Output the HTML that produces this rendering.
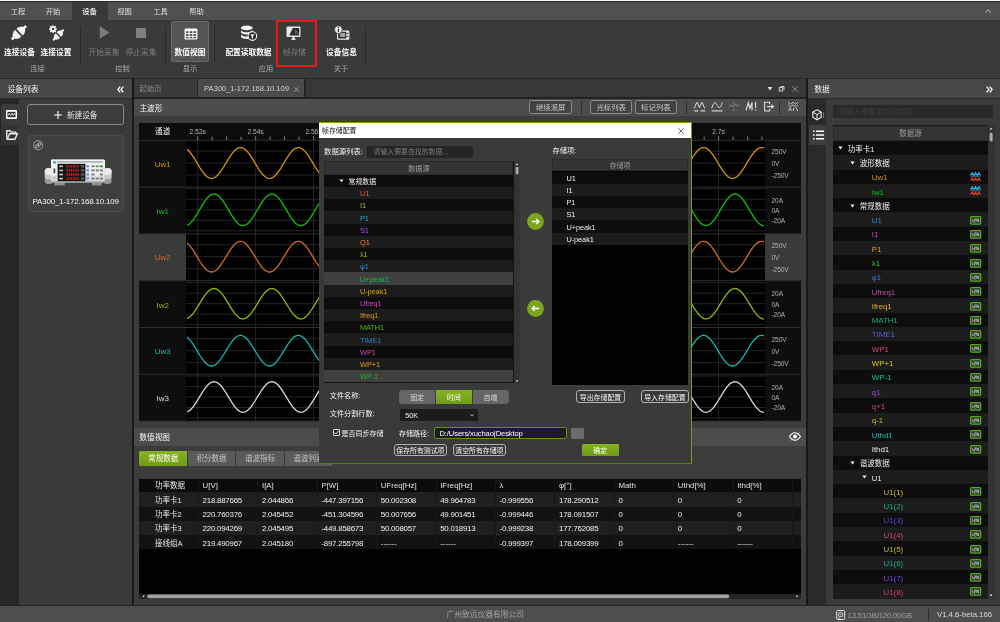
<!DOCTYPE html>
<html lang="zh"><head><meta charset="utf-8"><title>PA300</title><style>
html,body{margin:0;padding:0;background:#181818}
body{width:1000px;height:622px;position:relative;overflow:hidden;background:#181818;font-family:"Liberation Sans","Noto Sans CJK SC",sans-serif;font-size:7.5px;line-height:1;color:#e8e8e8;-webkit-font-smoothing:antialiased}
.a{position:absolute;box-sizing:border-box;white-space:nowrap}
.c{text-align:center}
.t{position:absolute;white-space:nowrap}
svg{position:absolute;overflow:visible}
#root{position:absolute;left:0;top:0;width:1000px;height:622px;will-change:transform}
</style></head><body><div id="root">
<div class="a" style="left:0.0px;top:0.0px;width:1000.0px;height:19.5px;background:#505050"></div>
<div class="a" style="left:0.0px;top:0.0px;width:1000.0px;height:2.4px;background:#262626"></div>
<div class="a" style="left:0.0px;top:0.0px;width:1000.0px;height:1.1px;background:#f6f6f6"></div>
<svg style="left:985.4px;top:8.6px" width="6.400" height="4" viewBox="0 0 6.400 4"><path d="M0.500 3.600L3.200 0.800L5.900 3.600" fill="none" stroke="#9a9a9a" stroke-width="1.100"/></svg>
<div class="a" style="left:71.5px;top:2.4px;width:36.0px;height:17.6px;background:#3a3a3a"></div>
<div class="t c" style="left:-2.0px;top:6.9px;width:40px;height:10px;line-height:10px;color:#ddd;font-size:7.3px;font-weight:400">工程</div>
<div class="t c" style="left:33.0px;top:6.9px;width:40px;height:10px;line-height:10px;color:#ddd;font-size:7.3px;font-weight:400">开始</div>
<div class="t c" style="left:69.5px;top:6.9px;width:40px;height:10px;line-height:10px;color:#fff;font-size:7.3px;font-weight:500">设备</div>
<div class="t c" style="left:104.5px;top:6.9px;width:40px;height:10px;line-height:10px;color:#ddd;font-size:7.3px;font-weight:400">视图</div>
<div class="t c" style="left:140.5px;top:6.9px;width:40px;height:10px;line-height:10px;color:#ddd;font-size:7.3px;font-weight:400">工具</div>
<div class="t c" style="left:176.5px;top:6.9px;width:40px;height:10px;line-height:10px;color:#ddd;font-size:7.3px;font-weight:400">帮助</div>
<div class="a" style="left:0.0px;top:19.5px;width:1000.0px;height:59.1px;background:#3a3a3a"></div>
<div class="a" style="left:0.0px;top:78.3px;width:1000.0px;height:1.1px;background:#262626"></div>
<div class="a" style="left:305.5px;top:78.5px;width:500.7px;height:0.9px;background:#444"></div>
<div class="a" style="left:79.5px;top:26.8px;width:1.0px;height:38.8px;background:#2b2b2b"></div>
<div class="a" style="left:164.5px;top:26.8px;width:1.0px;height:38.8px;background:#2b2b2b"></div>
<div class="a" style="left:214.2px;top:26.8px;width:1.0px;height:38.8px;background:#2b2b2b"></div>
<div class="a" style="left:365.1px;top:26.8px;width:1.0px;height:38.8px;background:#2b2b2b"></div>
<div class="a" style="left:171.2px;top:21.2px;width:37.6px;height:40.8px;background:#555;border:1px solid #6a6a6a;border-radius:2px"></div>
<div class="a" style="left:276.4px;top:19.5px;width:40.6px;height:47.5px;border:2.3px solid #f0141c"></div>
<div class="t c" style="left:-10.5px;top:48.1px;width:60px;height:10px;line-height:10px;color:#fff;font-size:7.7px;font-weight:700">连接设备</div>
<div class="t c" style="left:26.0px;top:48.1px;width:60px;height:10px;line-height:10px;color:#fff;font-size:7.7px;font-weight:700">连接设置</div>
<div class="t c" style="left:74.0px;top:48.1px;width:60px;height:10px;line-height:10px;color:#7c7c7c;font-size:7.7px;font-weight:400">开始采集</div>
<div class="t c" style="left:111.0px;top:48.1px;width:60px;height:10px;line-height:10px;color:#7c7c7c;font-size:7.7px;font-weight:400">停止采集</div>
<div class="t c" style="left:160.0px;top:48.1px;width:60px;height:10px;line-height:10px;color:#fff;font-size:7.7px;font-weight:700">数值视图</div>
<div class="t c" style="left:218.5px;top:48.1px;width:60px;height:10px;line-height:10px;color:#fff;font-size:7.7px;font-weight:700">配置读取数据</div>
<div class="t c" style="left:264.5px;top:48.1px;width:60px;height:10px;line-height:10px;color:#7c7c7c;font-size:7.7px;font-weight:400">帧存储</div>
<div class="t c" style="left:311.5px;top:48.1px;width:60px;height:10px;line-height:10px;color:#fff;font-size:7.7px;font-weight:700">设备信息</div>
<div class="t c" style="left:17.5px;top:64.1px;width:40px;height:10px;line-height:10px;color:#a8a8a8;font-size:7.2px">连接</div>
<div class="t c" style="left:102.5px;top:64.1px;width:40px;height:10px;line-height:10px;color:#a8a8a8;font-size:7.2px">控制</div>
<div class="t c" style="left:170.0px;top:64.1px;width:40px;height:10px;line-height:10px;color:#a8a8a8;font-size:7.2px">显示</div>
<div class="t c" style="left:246.0px;top:64.1px;width:40px;height:10px;line-height:10px;color:#a8a8a8;font-size:7.2px">应用</div>
<div class="t c" style="left:321.0px;top:64.1px;width:40px;height:10px;line-height:10px;color:#a8a8a8;font-size:7.2px">关于</div>
<svg style="left:0;top:0" width="80" height="50" viewBox="0 0 80 50"><g transform="translate(18.9 32.7) rotate(-43)" fill="#f2f2f2"><path d="M-9.800 -1.300H-7L-6.400 -2.600L-3.200 -4.500H-0.900V4.500H-3.200L-6.400 2.600L-7 1.300H-9.800Z"/><path d="M-9.800 -1.300H-7L-6.400 -2.600L-3.200 -4.500H-0.900V4.500H-3.200L-6.400 2.600L-7 1.300H-9.800Z" transform="scale(-1 1)"/></g></svg>
<svg style="left:0;top:0" width="80" height="50" viewBox="0 0 80 50"><path d="M54.50 29.10L56.90 29.10M54.06 30.16L55.76 31.86M53.00 30.60L53.00 33.00M51.94 30.16L50.24 31.86M51.50 29.10L49.10 29.10M51.94 28.04L50.24 26.34M53.00 27.60L53.00 25.20M54.06 28.04L55.76 26.34" stroke="#f2f2f2" stroke-width="1.5"/><circle cx="53" cy="29.1" r="2.1" fill="none" stroke="#f2f2f2" stroke-width="1.7"/><g transform="translate(58.4 35) rotate(-45) scale(0.76 0.700)" fill="#f2f2f2"><path d="M-9.800 -1.300H-7L-6.400 -2.600L-3.200 -4.500H-0.900V4.500H-3.200L-6.400 2.600L-7 1.300H-9.800Z"/><path d="M-9.800 -1.300H-7L-6.400 -2.600L-3.200 -4.500H-0.900V4.500H-3.200L-6.400 2.600L-7 1.300H-9.800Z" transform="scale(-1 1)"/></g></svg>
<svg style="left:99px;top:26px" width="12" height="13" viewBox="0 0 12 13"><path d="M0.8 0.3L10.5 6.5L0.8 12.7Z" fill="#7c7c7c"/></svg>
<div class="a" style="left:135.8px;top:27.6px;width:10.5px;height:10.4px;background:#808080"></div>
<svg style="left:183.9px;top:27.8px" width="14" height="12" viewBox="0 0 14 12"><rect x="0.6" y="0.6" width="12.8" height="10.8" rx="1" fill="#fff"/><g fill="#555"><rect x="2" y="3.2" width="2.6" height="1.9"/><rect x="5.6" y="3.2" width="2.8" height="1.9"/><rect x="9.4" y="3.2" width="2.6" height="1.9"/><rect x="2" y="6" width="2.6" height="1.9"/><rect x="5.6" y="6" width="2.8" height="1.9"/><rect x="9.4" y="6" width="2.6" height="1.9"/><rect x="2" y="8.8" width="2.6" height="1.6"/><rect x="5.6" y="8.8" width="2.8" height="1.6"/><rect x="9.4" y="8.8" width="2.6" height="1.6"/></g></svg>
<svg style="left:240px;top:24.5px" width="18" height="17" viewBox="0 0 18 17"><g fill="#f2f2f2"><ellipse cx="6.8" cy="2.9" rx="5.8" ry="2.3"/><path d="M1 5c0 1.2 2.6 2.2 5.8 2.2s5.8-1 5.8-2.2v2.3c0 1.2-2.6 2.2-5.8 2.2S1 8.500 1 7.300z"/><path d="M1 9.3c0 1.200 2.600 2.200 5.800 2.200s5.800-1 5.800-2.200v2.400c0 1.200-2.600 2.200-5.800 2.200S1 12.900 1 11.700z"/></g><circle cx="12.400" cy="11.100" r="4.300" fill="#2c2c2c" stroke="#f2f2f2" stroke-width="1.100"/><path d="M10.300 9.300h4.200l-1.400 1.900v2.300h-1.400v-2.300z" fill="#f2f2f2"/></svg>
<svg style="left:0;top:0" width="400" height="50" viewBox="0 0 400 50"><rect x="286.500" y="26.600" width="14" height="10.300" rx="1" fill="#e6e6e6"/><path d="M289.300 35.500L292.800 28.100H299.200V35.500Z" fill="#2e2e2e"/><path d="M295 30.300L296.600 31.800L295 33.300M297.200 33.400H298.400" stroke="#d0d0d0" stroke-width="0.700" fill="none"/><path d="M292.600 36.900H294.400L295.800 39.900H291.200Z" fill="#e6e6e6"/></svg>
<svg style="left:0;top:0" width="400" height="50" viewBox="0 0 400 50"><rect x="337.600" y="31.200" width="11.200" height="8" rx="0.800" fill="#2e2e2e" stroke="#ececec" stroke-width="1.200"/><rect x="346.300" y="31.200" width="2.500" height="8" fill="#ececec"/><path d="M346.300 33.400H349M346.300 36.400H349" stroke="#3a3a3a" stroke-width="0.800"/><rect x="340.300" y="33.300" width="4.800" height="3.400" fill="#d8d8d8"/><path d="M341.200 34.200V35.900M342.700 34.200V35.900M344.200 34.200V35.900" stroke="#3a3a3a" stroke-width="0.600"/><circle cx="338.400" cy="29.600" r="3.900" fill="#f4f4f4" stroke="#3a3a3a" stroke-width="0.800"/><rect x="337.700" y="28.900" width="1.400" height="3" fill="#2e2e2e"/><circle cx="338.400" cy="27.500" r="0.800" fill="#2e2e2e"/></svg>
<div class="a" style="left:0.0px;top:604.6px;width:1000.0px;height:17.4px;background:#4d4d4d;border-top:1px solid #222"></div>
<div class="t c" style="left:425.3px;top:610.4px;width:120px;height:10px;line-height:10px;color:#a8a8a8;font-size:7.75px">广州致远仪器有限公司</div>
<div class="a" style="left:927.6px;top:609.0px;width:1.0px;height:11.5px;background:#2e2e2e"></div>
<svg style="left:836.4px;top:610px" width="9.4" height="10" viewBox="0 0 9 10"><rect x="0.5" y="0.5" width="8" height="9" rx="1" fill="none" stroke="#e4e4e4" stroke-width="1"/><circle cx="4.5" cy="4.600" r="2.200" fill="none" stroke="#e4e4e4" stroke-width="0.900"/><circle cx="4.500" cy="4.600" r="0.700" fill="#e4e4e4"/><rect x="1.600" y="7.600" width="2" height="0.900" fill="#e4e4e4"/></svg>
<div class="t" style="left:847.6px;top:610.6px;height:10px;line-height:10px;color:#a0a0a0;font-size:7.7px;letter-spacing:-0.17px">13.51GB/120.00GB</div>
<div class="t" style="left:937.0px;top:610.0px;height:10px;line-height:10px;color:#d8d8d8;font-size:7.8px;letter-spacing:-0.03px">V1.4.6-beta.166</div>
<div class="a" style="left:0.0px;top:79.0px;width:131.8px;height:18.5px;background:#474747"></div>
<div class="t" style="left:7.4px;top:84.6px;height:10px;line-height:10px;color:#f0f0f0;font-size:7.75px">设备列表</div>
<svg style="left:116.5px;top:85.5px" width="7" height="7" viewBox="0 0 7 7"><path d="M3.2 0.7L0.9 3.5L3.2 6.3M6.3 0.7L4 3.5L6.3 6.3" fill="none" stroke="#fff" stroke-width="1.3"/></svg>
<div class="a" style="left:0.0px;top:97.5px;width:131.8px;height:1.0px;background:#2c2c2c"></div>
<div class="a" style="left:0.0px;top:98.5px;width:131.8px;height:506.5px;background:#3a3a3a"></div>
<div class="a" style="left:0.0px;top:98.5px;width:19.0px;height:506.5px;background:#272727"></div>
<div class="a" style="left:1.4px;top:104.0px;width:17.6px;height:20.6px;background:#3b3b3b;border-radius:1.5px 0 0 1.5px"></div>
<div class="a" style="left:1.4px;top:124.6px;width:17.6px;height:20.8px;background:#343434"></div>
<svg style="left:5.5px;top:110px" width="11" height="9" viewBox="0 0 11 9"><rect x="0" y="0" width="11" height="9" rx="1.200" fill="#fff"/><rect x="1.500" y="1.800" width="8" height="5.400" fill="#2a2a2a"/><path d="M2 5.6L3.3 3.2L4.6 5.6L5.9 3.2L7.2 5.6L8.5 3.2L9.2 4.5" fill="none" stroke="#fff" stroke-width="0.8"/></svg>
<svg style="left:5.5px;top:130px" width="12" height="10" viewBox="0 0 12 10"><path d="M0.800 8.500V0.800H4.200l1 1.300H9.800V3.300" fill="none" stroke="#e8e8e8" stroke-width="1.400"/><path d="M3.600 3.800H11.300L8.900 9.200H1.200z" fill="none" stroke="#e8e8e8" stroke-width="1.400"/></svg>
<div class="a" style="left:26.9px;top:103.5px;width:97.1px;height:21.8px;border:1px solid #8a8a8a;border-radius:3px;background:#3c3c3c"></div>
<svg style="left:53.5px;top:110.5px" width="8" height="8" viewBox="0 0 8 8"><path d="M4 0V8M0 4H8" stroke="#fff" stroke-width="1.1"/></svg>
<div class="t" style="left:67.0px;top:110.6px;height:10px;line-height:10px;color:#e0e0e0;font-size:7.6px">新建设备</div>
<div class="a" style="left:27.5px;top:134.5px;width:96.5px;height:77.5px;border:1px solid #4b4b4b;border-radius:2px;background:#3f3f3f"></div>
<svg style="left:32.800px;top:139.600px" width="10.400" height="10.400" viewBox="0 0 10.400 10.400"><circle cx="5.200" cy="5.200" r="4.600" fill="none" stroke="#9c9c9c" stroke-width="1"/><g transform="rotate(-40 5.200 5.200)" fill="none" stroke="#a8a8a8" stroke-width="1"><rect x="2" y="3.900" width="3.600" height="2.600" rx="1.300"/><rect x="4.800" y="3.900" width="3.600" height="2.600" rx="1.300"/></g></svg>
<svg style="left:44px;top:158px" width="70" height="30" viewBox="0 0 70 30"><rect x="0.800" y="10.300" width="8" height="15.700" rx="3" fill="#9a9a9a"/><rect x="0.800" y="10.300" width="8" height="11" rx="3" fill="#c8c8c8"/><rect x="0.800" y="10.300" width="8" height="6.500" rx="3" fill="#ececec"/><rect x="59.500" y="10.300" width="8" height="15.700" rx="3" fill="#9a9a9a"/><rect x="59.500" y="10.300" width="8" height="11" rx="3" fill="#c8c8c8"/><rect x="59.500" y="10.300" width="8" height="6.500" rx="3" fill="#ececec"/><rect x="10.400" y="24" width="10.300" height="3.400" fill="#8e8e8e"/><rect x="47.800" y="24" width="9.800" height="3.400" fill="#8e8e8e"/><rect x="7" y="1.800" width="53.800" height="22.900" rx="1" fill="#b0b0b0"/><rect x="7" y="1.800" width="53.800" height="21.300" rx="1" fill="#dcdcdc"/><rect x="7" y="1.800" width="53.800" height="16" rx="1" fill="#ececec"/><rect x="7" y="1.800" width="53.800" height="8" rx="1" fill="#f4f4f4"/><rect x="13" y="3" width="46" height="1.800" fill="#b4b8bc"/><rect x="13.600" y="5.800" width="27.800" height="17.400" fill="#161616"/><g stroke="#cc1c1c" stroke-width="2.300" stroke-dasharray="1.500 0.700"><path d="M22.500 8.300H35M22.500 12.400H35M22.500 16.500H35M22.500 20.600H35"/></g><g fill="#cfcfcf"><rect x="15.300" y="7.500" width="3.600" height="1.600"/><rect x="15.300" y="11.600" width="3.600" height="1.600"/><rect x="15.300" y="15.700" width="3.600" height="1.600"/><rect x="15.300" y="19.800" width="3.600" height="1.600"/></g><g fill="#555"><rect x="36.800" y="7" width="3.400" height="2.600"/><rect x="36.800" y="11.100" width="3.400" height="2.600"/><rect x="36.800" y="15.200" width="3.400" height="2.600"/><rect x="36.800" y="19.300" width="3.400" height="2.600"/></g><rect x="9.600" y="10.500" width="1.600" height="4.600" fill="#444"/><rect x="9.300" y="3.300" width="2.400" height="2.200" fill="#2a7fd0"/><circle cx="10.400" cy="20" r="1.200" fill="none" stroke="#aaa" stroke-width="0.500"/><g fill="#6a9ad8"><rect x="42.400" y="7" width="2.600" height="2.400"/><rect x="42.400" y="11.100" width="2.600" height="2.400"/><rect x="42.400" y="15.200" width="2.600" height="2.400"/><rect x="42.400" y="19.300" width="2.600" height="2.400"/></g><g fill="#70747a"><rect x="47.500" y="7.500" width="3" height="1.600"/><rect x="51.700" y="7.500" width="3" height="1.600"/><rect x="47.500" y="11.500" width="3" height="1.800"/><rect x="51.700" y="11.500" width="3" height="1.800"/><rect x="55.900" y="11.500" width="3" height="1.800"/><rect x="47.500" y="15.600" width="3" height="1.800"/><rect x="55.900" y="15.600" width="3" height="1.800"/><rect x="47.500" y="19.700" width="3" height="1.800"/><rect x="51.700" y="19.700" width="3" height="1.800"/><rect x="55.900" y="19.700" width="3" height="1.800"/></g><ellipse cx="57.300" cy="8.300" rx="1.600" ry="1.200" fill="#38b038"/></svg>
<div class="t c" style="left:20.6px;top:197.1px;width:110px;height:10px;line-height:10px;color:#f4f4f4;font-size:8px;letter-spacing:-0.2px">PA300_1-172.168.10.109</div>
<div class="a" style="left:134.0px;top:79.4px;width:672.2px;height:18.1px;background:#383838"></div>
<div class="a" style="left:134.0px;top:79.4px;width:63.0px;height:18.1px;background:#3b3b3b"></div>
<div class="t" style="left:139.5px;top:84.4px;height:10px;line-height:10px;color:#8a8a8a;font-size:7.4px">起始页</div>
<div class="a" style="left:197.5px;top:79.4px;width:107.0px;height:18.1px;background:#4a4a4a"></div>
<div class="a" style="left:196.9px;top:79.4px;width:1.3px;height:18.1px;background:#262626"></div>
<div class="a" style="left:304.4px;top:79.4px;width:1.2px;height:18.1px;background:#262626"></div>
<div class="t" style="left:204.0px;top:84.4px;height:10px;line-height:10px;color:#d0d0d0;font-size:7.7px;letter-spacing:-0.1px">PA300_1-172.168.10.109</div>
<svg style="left:294px;top:86.5px" width="5" height="5" viewBox="0 0 5 5"><path d="M0.3 0.3L4.7 4.7M4.7 0.3L0.3 4.7" stroke="#bbb" stroke-width="0.7"/></svg>
<svg style="left:767px;top:86px" width="34" height="6" viewBox="0 0 34 6"><path d="M0.5 1L5.5 1L3 4.6Z" fill="#ddd"/><rect x="12.3" y="1.6" width="3.4" height="3.4" fill="none" stroke="#ddd" stroke-width="0.9"/><path d="M13.6 0.5H17V3.8" fill="none" stroke="#ddd" stroke-width="0.9"/><path d="M25.3 0.3L30.7 5.7M30.7 0.3L25.3 5.7" stroke="#999" stroke-width="0.8"/></svg>
<div class="a" style="left:134.0px;top:97.5px;width:672.2px;height:507.5px;background:#3c3c3c"></div>
<div class="a" style="left:134.0px;top:97.3px;width:672.2px;height:2.0px;background:#222"></div>
<div class="a" style="left:134.0px;top:99.3px;width:672.2px;height:17.0px;background:#4c4c4c"></div>
<div class="t" style="left:139.5px;top:103.8px;height:10px;line-height:10px;color:#f4f4f4;font-size:7.6px">主波形</div>
<div class="a" style="left:529.4px;top:100.2px;width:42.6px;height:13.6px;border:1px solid #8c8c8c;border-radius:2.5px;background:#424242"></div>
<div class="t c" style="left:520.7px;top:102.8px;width:60px;height:10px;line-height:10px;color:#c8c8c8;font-size:7.4px">继续滚屏</div>
<div class="a" style="left:590.2px;top:100.2px;width:42.0px;height:13.6px;border:1px solid #8c8c8c;border-radius:2.5px;background:#424242"></div>
<div class="t c" style="left:581.2px;top:102.8px;width:60px;height:10px;line-height:10px;color:#c8c8c8;font-size:7.4px">光标列表</div>
<div class="a" style="left:635.1px;top:100.2px;width:41.5px;height:13.6px;border:1px solid #8c8c8c;border-radius:2.5px;background:#424242"></div>
<div class="t c" style="left:625.9px;top:102.8px;width:60px;height:10px;line-height:10px;color:#c8c8c8;font-size:7.4px">标记列表</div>
<div class="a" style="left:581.0px;top:101.0px;width:1.0px;height:13.0px;background:#2e2e2e"></div>
<div class="a" style="left:685.5px;top:101.0px;width:1.0px;height:13.0px;background:#2e2e2e"></div>
<div class="a" style="left:778.5px;top:101.0px;width:1.0px;height:13.0px;background:#2e2e2e"></div>
<svg style="left:0;top:0" width="1000" height="130" viewBox="0 0 1000 130" fill="none" stroke="#dcdcdc" stroke-width="1"><path d="M694.3 108.6L696.6 102.600Q697 101.800 697.400 102.600L699.400 107.600L701.600 102.600Q702 101.800 702.400 102.600L704.700 108.600"/><path d="M694.300 110.900H698.200M700.600 110.900H705.200" stroke-width="1.100"/><path d="M711.800 108.400C713.500 101.500 715.500 101.500 717.300 105.400S720.500 108 722.400 102.400"/><path d="M711.500 110.900H722.600" stroke-width="1.100"/><path d="M729 107.500C730.500 104.500 731.500 104.500 732.700 106.500S734.500 103 735.500 104S737.500 108 739 104.500" stroke="#9a9a9a" stroke-width="0.900"/><path d="M733.900 102.300V103.300M733.900 109.500V110.500" stroke="#bbb" stroke-width="1.100"/><path d="M746 110.400L748.300 102.800L749.800 108.400L752 102.600V110.400" stroke-width="1.200"/><path d="M755.600 102V108M755.600 109.300V110.600" stroke-width="1.200"/><path d="M769.600 104.300V102.200H764.600V111H769.600V108.900" stroke-width="1.100"/><path d="M767 106.600H772" stroke-width="1.300"/><path d="M771.300 104L774.300 106.600L771.300 109.200Z" fill="#dcdcdc" stroke="none"/><path d="M788 102.200L790.500 104.400L793 102.200L795.500 104.400L798 102.200M788 104.800L790.500 107L793 104.800L795.500 107L798 104.800M788.600 111L790 107.800L791.400 111M793.400 108V111M796 107.800L797.800 111" stroke-width="0.800"/></svg>
<div class="a" style="left:139.2px;top:122.7px;width:661.4px;height:298.3px;background:#000"></div>
<div class="a" style="left:139.2px;top:122.7px;width:661.4px;height:17.3px;background:#0c0c0c"></div>
<div class="a" style="left:139.2px;top:140.0px;width:47.0px;height:281.0px;background:#0e0e0e"></div>
<div class="a" style="left:765.4px;top:140.0px;width:35.2px;height:281.0px;background:#0e0e0e"></div>
<div class="a" style="left:139.2px;top:233.6px;width:47.0px;height:46.8px;background:#3a3a3a"></div>
<div class="a" style="left:765.4px;top:233.6px;width:35.2px;height:46.8px;background:#3a3a3a"></div>
<div class="t c" style="left:139.7px;top:127.3px;width:46px;height:10px;line-height:10px;color:#f0f0f0;font-size:7.6px">通道</div>
<svg style="left:0;top:0" width="1000" height="622" viewBox="0 0 1000 622"><path d="M197.7 140V421.0" stroke="#2d2d2d" stroke-width="0.8"/><path d="M255.6 140V421.0" stroke="#2d2d2d" stroke-width="0.8"/><path d="M313.5 140V421.0" stroke="#2d2d2d" stroke-width="0.8"/><path d="M371.3 140V421.0" stroke="#2d2d2d" stroke-width="0.8"/><path d="M429.2 140V421.0" stroke="#2d2d2d" stroke-width="0.8"/><path d="M487.1 140V421.0" stroke="#2d2d2d" stroke-width="0.8"/><path d="M545.0 140V421.0" stroke="#2d2d2d" stroke-width="0.8"/><path d="M602.9 140V421.0" stroke="#2d2d2d" stroke-width="0.8"/><path d="M660.7 140V421.0" stroke="#2d2d2d" stroke-width="0.8"/><path d="M718.6 140V421.0" stroke="#2d2d2d" stroke-width="0.8"/><path d="M197.7 136.2V140M212.2 136.6V140M226.6 136.6V140M241.1 136.6V140M255.6 136.2V140M270.1 136.6V140M284.5 136.6V140M299.0 136.6V140M313.5 136.2V140M327.9 136.6V140M342.4 136.6V140M356.9 136.6V140M371.3 136.2V140M385.8 136.6V140M400.3 136.6V140M414.8 136.6V140M429.2 136.2V140M443.7 136.6V140M458.2 136.6V140M472.6 136.6V140M487.1 136.2V140M501.6 136.6V140M516.0 136.6V140M530.5 136.6V140M545.0 136.2V140M559.5 136.6V140M573.9 136.6V140M588.4 136.6V140M602.9 136.2V140M617.3 136.6V140M631.8 136.6V140M646.3 136.6V140M660.7 136.2V140M675.2 136.6V140M689.7 136.6V140M704.2 136.6V140M718.6 136.2V140M733.1 136.6V140M747.6 136.6V140M762.0 136.6V140" stroke="#9a9a9a" stroke-width="0.8"/><path d="M186.2 151.0H765.4" stroke="#2f2f2f" stroke-width="0.8"/><path d="M186.2 163.0H765.4" stroke="#2f2f2f" stroke-width="0.8"/><path d="M186.2 175.0H765.4" stroke="#2f2f2f" stroke-width="0.8"/><path d="M186.2 188.8H765.4" stroke="#2f2f2f" stroke-width="0.8"/><path d="M186.2 199.3H765.4" stroke="#2f2f2f" stroke-width="0.8"/><path d="M186.2 209.8H765.4" stroke="#2f2f2f" stroke-width="0.8"/><path d="M186.2 220.3H765.4" stroke="#2f2f2f" stroke-width="0.8"/><path d="M186.2 230.8H765.4" stroke="#2f2f2f" stroke-width="0.8"/><path d="M186.2 244.7H765.4" stroke="#2f2f2f" stroke-width="0.8"/><path d="M186.2 256.7H765.4" stroke="#2f2f2f" stroke-width="0.8"/><path d="M186.2 268.7H765.4" stroke="#2f2f2f" stroke-width="0.8"/><path d="M186.2 282.7H765.4" stroke="#2f2f2f" stroke-width="0.8"/><path d="M186.2 293.2H765.4" stroke="#2f2f2f" stroke-width="0.8"/><path d="M186.2 303.7H765.4" stroke="#2f2f2f" stroke-width="0.8"/><path d="M186.2 314.2H765.4" stroke="#2f2f2f" stroke-width="0.8"/><path d="M186.2 324.7H765.4" stroke="#2f2f2f" stroke-width="0.8"/><path d="M186.2 338.7H765.4" stroke="#2f2f2f" stroke-width="0.8"/><path d="M186.2 350.7H765.4" stroke="#2f2f2f" stroke-width="0.8"/><path d="M186.2 362.7H765.4" stroke="#2f2f2f" stroke-width="0.8"/><path d="M186.2 376.0H765.4" stroke="#2f2f2f" stroke-width="0.8"/><path d="M186.2 386.5H765.4" stroke="#2f2f2f" stroke-width="0.8"/><path d="M186.2 397.0H765.4" stroke="#2f2f2f" stroke-width="0.8"/><path d="M186.2 407.5H765.4" stroke="#2f2f2f" stroke-width="0.8"/><path d="M186.2 418.0H765.4" stroke="#2f2f2f" stroke-width="0.8"/><path d="M139.2 140.3H800.6" stroke="#303030" stroke-width="1"/><path d="M139.2 187.1H800.6" stroke="#303030" stroke-width="1"/><path d="M139.2 233.9H800.6" stroke="#303030" stroke-width="1"/><path d="M139.2 280.7H800.6" stroke="#303030" stroke-width="1"/><path d="M139.2 327.5H800.6" stroke="#303030" stroke-width="1"/><path d="M139.2 374.3H800.6" stroke="#303030" stroke-width="1"/><path d="M139.2 421.1H800.6" stroke="#303030" stroke-width="1"/><path d="M187.0 149.3L188.0 150.2L189.0 151.1L190.0 152.3L191.0 153.5L192.0 154.9L193.0 156.4L194.0 157.9L195.0 159.5L196.0 161.2L197.0 162.8L198.0 164.5L199.0 166.2L200.0 167.8L201.0 169.3L202.0 170.8L203.0 172.2L204.0 173.5L205.0 174.7L206.0 175.7L207.0 176.6L208.0 177.3L209.0 177.8L210.0 178.2L211.0 178.4L212.0 178.4L213.0 178.2L214.0 177.9L215.0 177.3L216.0 176.6L217.0 175.8L218.0 174.8L219.0 173.6L220.0 172.4L221.0 171.0L222.0 169.5L223.0 168.0L224.0 166.4L225.0 164.7L226.0 163.1L227.0 161.4L228.0 159.7L229.0 158.1L230.0 156.6L231.0 155.1L232.0 153.7L233.0 152.4L234.0 151.3L235.0 150.3L236.0 149.4L237.0 148.7L238.0 148.2L239.0 147.8L240.0 147.6L241.0 147.6L242.0 147.8L243.0 148.2L244.0 148.7L245.0 149.4L246.0 150.3L247.0 151.3L248.0 152.4L249.0 153.7L250.0 155.1L251.0 156.6L252.0 158.1L253.0 159.7L254.0 161.4L255.0 163.1L256.0 164.7L257.0 166.4L258.0 168.0L259.0 169.5L260.0 171.0L261.0 172.4L262.0 173.6L263.0 174.8L264.0 175.8L265.0 176.6L266.0 177.3L267.0 177.9L268.0 178.2L269.0 178.4L270.0 178.4L271.0 178.2L272.0 177.8L273.0 177.3L274.0 176.6L275.0 175.7L276.0 174.7L277.0 173.5L278.0 172.2L279.0 170.8L280.0 169.3L281.0 167.8L282.0 166.2L283.0 164.5L284.0 162.8L285.0 161.2L286.0 159.5L287.0 157.9L288.0 156.4L289.0 154.9L290.0 153.5L291.0 152.3L292.0 151.1L293.0 150.2L294.0 149.3L295.0 148.6L296.0 148.1L297.0 147.8L298.0 147.6L299.0 147.6L300.0 147.8L301.0 148.2L302.0 148.8L303.0 149.5L304.0 150.4L305.0 151.4L306.0 152.6L307.0 153.9L308.0 155.3L309.0 156.7L310.0 158.3L311.0 159.9L312.0 161.6L313.0 163.3L314.0 164.9L315.0 166.6L316.0 168.2L317.0 169.7L318.0 171.2L319.0 172.5L320.0 173.8L321.0 174.9L322.0 175.9L323.0 176.7L324.0 177.4L325.0 177.9L326.0 178.2L327.0 178.4L328.0 178.4L329.0 178.1L330.0 177.8L331.0 177.2L332.0 176.5L333.0 175.6L334.0 174.5L335.0 173.4L336.0 172.1L337.0 170.7L338.0 169.2L339.0 167.6L340.0 166.0L341.0 164.3L342.0 162.6L343.0 161.0L344.0 159.3L345.0 157.7L346.0 156.2L347.0 154.7L348.0 153.4L349.0 152.1L350.0 151.0L351.0 150.0L352.0 149.2L353.0 148.6L354.0 148.1L355.0 147.7L356.0 147.6L357.0 147.6L358.0 147.9L359.0 148.3L360.0 148.9L361.0 149.6L362.0 150.5L363.0 151.5L364.0 152.7L365.0 154.0L366.0 155.4L367.0 156.9L368.0 158.5L369.0 160.1L370.0 161.8L371.0 163.5L372.0 165.1L373.0 166.8L374.0 168.4L375.0 169.9L376.0 171.3L377.0 172.7L378.0 173.9L379.0 175.0L380.0 176.0L381.0 176.8L382.0 177.5L383.0 178.0L384.0 178.3L385.0 178.4L386.0 178.3L387.0 178.1L388.0 177.7L389.0 177.1L390.0 176.4L391.0 175.4L392.0 174.4L393.0 173.2L394.0 171.9L395.0 170.5L396.0 169.0L397.0 167.4L398.0 165.8L399.0 164.1L400.0 162.4L401.0 160.8L402.0 159.1L403.0 157.6L404.0 156.0L405.0 154.6L406.0 153.2L407.0 152.0L408.0 150.9L409.0 149.9L410.0 149.1L411.0 148.5L412.0 148.0L413.0 147.7L414.0 147.6L415.0 147.7L416.0 147.9L417.0 148.3L418.0 148.9L419.0 149.7L420.0 150.6L421.0 151.7L422.0 152.9L423.0 154.2L424.0 155.6L425.0 157.1L426.0 158.7L427.0 160.3L428.0 162.0L429.0 163.7L430.0 165.3L431.0 167.0L432.0 168.5L433.0 170.1L434.0 171.5L435.0 172.8L436.0 174.1L437.0 175.2L438.0 176.1L439.0 176.9L440.0 177.5L441.0 178.0L442.0 178.3L443.0 178.4L444.0 178.3L445.0 178.1L446.0 177.6L447.0 177.0L448.0 176.3L449.0 175.3L450.0 174.3L451.0 173.1L452.0 171.7L453.0 170.3L454.0 168.8L455.0 167.2L456.0 165.6L457.0 163.9L458.0 162.2L459.0 160.6L460.0 159.0L461.0 157.4L462.0 155.8L463.0 154.4L464.0 153.1L465.0 151.9L466.0 150.8L467.0 149.8L468.0 149.0L469.0 148.4L470.0 148.0L471.0 147.7L472.0 147.6L473.0 147.7L474.0 148.0L475.0 148.4L476.0 149.0L477.0 149.8L478.0 150.7L479.0 151.8L480.0 153.0L481.0 154.4L482.0 155.8L483.0 157.3L484.0 158.9L485.0 160.5L486.0 162.2L487.0 163.9L488.0 165.5L489.0 167.1L490.0 168.7L491.0 170.2L492.0 171.7L493.0 173.0L494.0 174.2L495.0 175.3L496.0 176.2L497.0 177.0L498.0 177.6L499.0 178.1L500.0 178.3L501.0 178.4L502.0 178.3L503.0 178.0L504.0 177.6L505.0 176.9L506.0 176.2L507.0 175.2L508.0 174.1L509.0 172.9L510.0 171.6L511.0 170.1L512.0 168.6L513.0 167.0L514.0 165.4L515.0 163.7L516.0 162.0L517.0 160.4L518.0 158.8L519.0 157.2L520.0 155.7L521.0 154.2L522.0 152.9L523.0 151.7L524.0 150.7L525.0 149.7L526.0 149.0L527.0 148.4L528.0 147.9L529.0 147.7L530.0 147.6L531.0 147.7L532.0 148.0L533.0 148.5L534.0 149.1L535.0 149.9L536.0 150.9L537.0 152.0L538.0 153.2L539.0 154.5L540.0 156.0L541.0 157.5L542.0 159.1L543.0 160.7L544.0 162.4L545.0 164.1L546.0 165.7L547.0 167.3L548.0 168.9L549.0 170.4L550.0 171.8L551.0 173.2L552.0 174.3L553.0 175.4L554.0 176.3L555.0 177.1L556.0 177.7L557.0 178.1L558.0 178.3L559.0 178.4L560.0 178.3L561.0 178.0L562.0 177.5L563.0 176.9L564.0 176.0L565.0 175.1L566.0 174.0L567.0 172.7L568.0 171.4L569.0 169.9L570.0 168.4L571.0 166.8L572.0 165.2L573.0 163.5L574.0 161.8L575.0 160.2L576.0 158.6L577.0 157.0L578.0 155.5L579.0 154.1L580.0 152.8L581.0 151.6L582.0 150.5L583.0 149.6L584.0 148.9L585.0 148.3L586.0 147.9L587.0 147.7L588.0 147.6L589.0 147.7L590.0 148.0L591.0 148.5L592.0 149.2L593.0 150.0L594.0 151.0L595.0 152.1L596.0 153.3L597.0 154.7L598.0 156.1L599.0 157.7L600.0 159.3L601.0 160.9L602.0 162.6L603.0 164.3L604.0 165.9L605.0 167.5L606.0 169.1L607.0 170.6L608.0 172.0L609.0 173.3L610.0 174.5L611.0 175.5L612.0 176.4L613.0 177.2L614.0 177.7L615.0 178.1L616.0 178.4L617.0 178.4L618.0 178.3L619.0 177.9L620.0 177.4L621.0 176.8L622.0 175.9L623.0 175.0L624.0 173.8L625.0 172.6L626.0 171.2L627.0 169.8L628.0 168.2L629.0 166.6L630.0 165.0L631.0 163.3L632.0 161.6L633.0 160.0L634.0 158.4L635.0 156.8L636.0 155.3L637.0 153.9L638.0 152.6L639.0 151.5L640.0 150.4L641.0 149.5L642.0 148.8L643.0 148.2L644.0 147.8L645.0 147.6L646.0 147.6L647.0 147.8L648.0 148.1L649.0 148.6L650.0 149.3L651.0 150.1L652.0 151.1L653.0 152.2L654.0 153.5L655.0 154.9L656.0 156.3L657.0 157.9L658.0 159.5L659.0 161.1L660.0 162.8L661.0 164.5L662.0 166.1L663.0 167.7L664.0 169.3L665.0 170.8L666.0 172.2L667.0 173.4L668.0 174.6L669.0 175.6L670.0 176.5L671.0 177.2L672.0 177.8L673.0 178.2L674.0 178.4L675.0 178.4L676.0 178.2L677.0 177.9L678.0 177.4L679.0 176.7L680.0 175.8L681.0 174.8L682.0 173.7L683.0 172.4L684.0 171.1L685.0 169.6L686.0 168.0L687.0 166.4L688.0 164.8L689.0 163.1L690.0 161.4L691.0 159.8L692.0 158.2L693.0 156.6L694.0 155.1L695.0 153.8L696.0 152.5L697.0 151.3L698.0 150.3L699.0 149.4L700.0 148.7L701.0 148.2L702.0 147.8L703.0 147.6L704.0 147.6L705.0 147.8L706.0 148.1L707.0 148.7L708.0 149.4L709.0 150.2L710.0 151.2L711.0 152.4L712.0 153.7L713.0 155.0L714.0 156.5L715.0 158.1L716.0 159.7L717.0 161.3L718.0 163.0L719.0 164.7L720.0 166.3L721.0 167.9L722.0 169.5L723.0 170.9L724.0 172.3L725.0 173.6L726.0 174.7L727.0 175.8L728.0 176.6L729.0 177.3L730.0 177.8L731.0 178.2L732.0 178.4L733.0 178.4L734.0 178.2L735.0 177.8L736.0 177.3L737.0 176.6L738.0 175.7L739.0 174.7L740.0 173.5L741.0 172.3L742.0 170.9L743.0 169.4L744.0 167.8L745.0 166.2L746.0 164.6L747.0 162.9L748.0 161.2L749.0 159.6L750.0 158.0L751.0 156.4L752.0 155.0L753.0 153.6L754.0 152.3L755.0 151.2L756.0 150.2L757.0 149.3L758.0 148.6L759.0 148.1L760.0 147.8L761.0 147.6L762.0 147.6L763.0 147.8L764.0 148.2" fill="none" stroke="#d4970c" stroke-width="1.3" stroke-linejoin="round"/><path d="M187.0 225.3L188.0 224.8L189.0 224.2L190.0 223.4L191.0 222.4L192.0 221.3L193.0 220.1L194.0 218.7L195.0 217.3L196.0 215.7L197.0 214.1L198.0 212.4L199.0 210.7L200.0 209.0L201.0 207.3L202.0 205.6L203.0 204.0L204.0 202.4L205.0 201.0L206.0 199.6L207.0 198.3L208.0 197.2L209.0 196.3L210.0 195.5L211.0 194.8L212.0 194.4L213.0 194.1L214.0 194.0L215.0 194.1L216.0 194.4L217.0 194.8L218.0 195.5L219.0 196.3L220.0 197.2L221.0 198.3L222.0 199.6L223.0 201.0L224.0 202.4L225.0 204.0L226.0 205.6L227.0 207.3L228.0 209.0L229.0 210.7L230.0 212.4L231.0 214.1L232.0 215.7L233.0 217.3L234.0 218.7L235.0 220.1L236.0 221.3L237.0 222.4L238.0 223.4L239.0 224.2L240.0 224.8L241.0 225.3L242.0 225.5L243.0 225.6L244.0 225.5L245.0 225.2L246.0 224.7L247.0 224.1L248.0 223.3L249.0 222.3L250.0 221.2L251.0 219.9L252.0 218.6L253.0 217.1L254.0 215.5L255.0 213.9L256.0 212.2L257.0 210.5L258.0 208.8L259.0 207.1L260.0 205.4L261.0 203.8L262.0 202.2L263.0 200.8L264.0 199.4L265.0 198.2L266.0 197.1L267.0 196.2L268.0 195.4L269.0 194.8L270.0 194.3L271.0 194.1L272.0 194.0L273.0 194.1L274.0 194.4L275.0 194.9L276.0 195.6L277.0 196.4L278.0 197.4L279.0 198.5L280.0 199.8L281.0 201.1L282.0 202.6L283.0 204.2L284.0 205.8L285.0 207.5L286.0 209.2L287.0 210.9L288.0 212.6L289.0 214.3L290.0 215.9L291.0 217.4L292.0 218.9L293.0 220.2L294.0 221.5L295.0 222.6L296.0 223.5L297.0 224.3L298.0 224.9L299.0 225.3L300.0 225.5L301.0 225.6L302.0 225.5L303.0 225.2L304.0 224.7L305.0 224.0L306.0 223.2L307.0 222.2L308.0 221.0L309.0 219.8L310.0 218.4L311.0 216.9L312.0 215.3L313.0 213.7L314.0 212.0L315.0 210.3L316.0 208.6L317.0 206.9L318.0 205.2L319.0 203.6L320.0 202.1L321.0 200.6L322.0 199.3L323.0 198.1L324.0 197.0L325.0 196.1L326.0 195.3L327.0 194.7L328.0 194.3L329.0 194.1L330.0 194.0L331.0 194.1L332.0 194.5L333.0 195.0L334.0 195.6L335.0 196.5L336.0 197.5L337.0 198.6L338.0 199.9L339.0 201.3L340.0 202.8L341.0 204.4L342.0 206.0L343.0 207.7L344.0 209.4L345.0 211.1L346.0 212.8L347.0 214.5L348.0 216.1L349.0 217.6L350.0 219.1L351.0 220.4L352.0 221.6L353.0 222.7L354.0 223.6L355.0 224.3L356.0 224.9L357.0 225.3L358.0 225.6L359.0 225.6L360.0 225.4L361.0 225.1L362.0 224.6L363.0 223.9L364.0 223.1L365.0 222.0L366.0 220.9L367.0 219.6L368.0 218.2L369.0 216.7L370.0 215.1L371.0 213.5L372.0 211.8L373.0 210.1L374.0 208.4L375.0 206.7L376.0 205.0L377.0 203.4L378.0 201.9L379.0 200.5L380.0 199.1L381.0 197.9L382.0 196.9L383.0 196.0L384.0 195.2L385.0 194.6L386.0 194.2L387.0 194.0L388.0 194.0L389.0 194.2L390.0 194.5L391.0 195.0L392.0 195.7L393.0 196.6L394.0 197.6L395.0 198.8L396.0 200.1L397.0 201.5L398.0 203.0L399.0 204.6L400.0 206.2L401.0 207.9L402.0 209.6L403.0 211.3L404.0 213.0L405.0 214.7L406.0 216.3L407.0 217.8L408.0 219.2L409.0 220.5L410.0 221.7L411.0 222.8L412.0 223.7L413.0 224.4L414.0 225.0L415.0 225.4L416.0 225.6L417.0 225.6L418.0 225.4L419.0 225.1L420.0 224.5L421.0 223.8L422.0 222.9L423.0 221.9L424.0 220.7L425.0 219.4L426.0 218.0L427.0 216.5L428.0 214.9L429.0 213.3L430.0 211.6L431.0 209.9L432.0 208.2L433.0 206.5L434.0 204.8L435.0 203.2L436.0 201.7L437.0 200.3L438.0 199.0L439.0 197.8L440.0 196.8L441.0 195.9L442.0 195.1L443.0 194.6L444.0 194.2L445.0 194.0L446.0 194.0L447.0 194.2L448.0 194.6L449.0 195.1L450.0 195.8L451.0 196.7L452.0 197.8L453.0 198.9L454.0 200.2L455.0 201.7L456.0 203.2L457.0 204.8L458.0 206.4L459.0 208.1L460.0 209.8L461.0 211.5L462.0 213.2L463.0 214.9L464.0 216.5L465.0 218.0L466.0 219.4L467.0 220.7L468.0 221.9L469.0 222.9L470.0 223.8L471.0 224.5L472.0 225.0L473.0 225.4L474.0 225.6L475.0 225.6L476.0 225.4L477.0 225.0L478.0 224.4L479.0 223.7L480.0 222.8L481.0 221.8L482.0 220.6L483.0 219.3L484.0 217.9L485.0 216.3L486.0 214.7L487.0 213.1L488.0 211.4L489.0 209.7L490.0 208.0L491.0 206.3L492.0 204.6L493.0 203.0L494.0 201.5L495.0 200.1L496.0 198.8L497.0 197.7L498.0 196.6L499.0 195.8L500.0 195.1L501.0 194.5L502.0 194.2L503.0 194.0L504.0 194.0L505.0 194.2L506.0 194.6L507.0 195.2L508.0 195.9L509.0 196.8L510.0 197.9L511.0 199.1L512.0 200.4L513.0 201.8L514.0 203.4L515.0 205.0L516.0 206.6L517.0 208.3L518.0 210.0L519.0 211.7L520.0 213.4L521.0 215.1L522.0 216.6L523.0 218.2L524.0 219.6L525.0 220.8L526.0 222.0L527.0 223.0L528.0 223.9L529.0 224.6L530.0 225.1L531.0 225.4L532.0 225.6L533.0 225.6L534.0 225.3L535.0 224.9L536.0 224.4L537.0 223.6L538.0 222.7L539.0 221.6L540.0 220.4L541.0 219.1L542.0 217.7L543.0 216.2L544.0 214.5L545.0 212.9L546.0 211.2L547.0 209.5L548.0 207.8L549.0 206.1L550.0 204.4L551.0 202.9L552.0 201.4L553.0 200.0L554.0 198.7L555.0 197.5L556.0 196.5L557.0 195.7L558.0 195.0L559.0 194.5L560.0 194.2L561.0 194.0L562.0 194.0L563.0 194.3L564.0 194.7L565.0 195.3L566.0 196.0L567.0 196.9L568.0 198.0L569.0 199.2L570.0 200.6L571.0 202.0L572.0 203.5L573.0 205.2L574.0 206.8L575.0 208.5L576.0 210.2L577.0 211.9L578.0 213.6L579.0 215.3L580.0 216.8L581.0 218.3L582.0 219.7L583.0 221.0L584.0 222.1L585.0 223.1L586.0 224.0L587.0 224.6L588.0 225.1L589.0 225.5L590.0 225.6L591.0 225.5L592.0 225.3L593.0 224.9L594.0 224.3L595.0 223.5L596.0 222.6L597.0 221.5L598.0 220.3L599.0 219.0L600.0 217.5L601.0 216.0L602.0 214.3L603.0 212.7L604.0 211.0L605.0 209.3L606.0 207.6L607.0 205.9L608.0 204.2L609.0 202.7L610.0 201.2L611.0 199.8L612.0 198.5L613.0 197.4L614.0 196.4L615.0 195.6L616.0 194.9L617.0 194.4L618.0 194.1L619.0 194.0L620.0 194.1L621.0 194.3L622.0 194.7L623.0 195.4L624.0 196.1L625.0 197.1L626.0 198.2L627.0 199.4L628.0 200.7L629.0 202.2L630.0 203.7L631.0 205.4L632.0 207.0L633.0 208.7L634.0 210.4L635.0 212.1L636.0 213.8L637.0 215.5L638.0 217.0L639.0 218.5L640.0 219.9L641.0 221.1L642.0 222.3L643.0 223.2L644.0 224.1L645.0 224.7L646.0 225.2L647.0 225.5L648.0 225.6L649.0 225.5L650.0 225.3L651.0 224.8L652.0 224.2L653.0 223.4L654.0 222.5L655.0 221.4L656.0 220.1L657.0 218.8L658.0 217.3L659.0 215.8L660.0 214.2L661.0 212.5L662.0 210.8L663.0 209.1L664.0 207.4L665.0 205.7L666.0 204.1L667.0 202.5L668.0 201.0L669.0 199.6L670.0 198.4L671.0 197.3L672.0 196.3L673.0 195.5L674.0 194.9L675.0 194.4L676.0 194.1L677.0 194.0L678.0 194.1L679.0 194.4L680.0 194.8L681.0 195.4L682.0 196.2L683.0 197.2L684.0 198.3L685.0 199.5L686.0 200.9L687.0 202.4L688.0 203.9L689.0 205.5L690.0 207.2L691.0 208.9L692.0 210.6L693.0 212.3L694.0 214.0L695.0 215.6L696.0 217.2L697.0 218.7L698.0 220.0L699.0 221.3L700.0 222.4L701.0 223.3L702.0 224.1L703.0 224.8L704.0 225.2L705.0 225.5L706.0 225.6L707.0 225.5L708.0 225.2L709.0 224.8L710.0 224.1L711.0 223.3L712.0 222.3L713.0 221.2L714.0 220.0L715.0 218.6L716.0 217.1L717.0 215.6L718.0 214.0L719.0 212.3L720.0 210.6L721.0 208.9L722.0 207.2L723.0 205.5L724.0 203.9L725.0 202.3L726.0 200.8L727.0 199.5L728.0 198.3L729.0 197.2L730.0 196.2L731.0 195.4L732.0 194.8L733.0 194.3L734.0 194.1L735.0 194.0L736.0 194.1L737.0 194.4L738.0 194.9L739.0 195.5L740.0 196.3L741.0 197.3L742.0 198.4L743.0 199.7L744.0 201.1L745.0 202.6L746.0 204.1L747.0 205.7L748.0 207.4L749.0 209.1L750.0 210.8L751.0 212.5L752.0 214.2L753.0 215.8L754.0 217.4L755.0 218.8L756.0 220.2L757.0 221.4L758.0 222.5L759.0 223.5L760.0 224.2L761.0 224.8L762.0 225.3L763.0 225.5L764.0 225.6" fill="none" stroke="#10c010" stroke-width="1.3" stroke-linejoin="round"/><path d="M187.0 243.1L188.0 243.9L189.0 244.9L190.0 246.1L191.0 247.3L192.0 248.7L193.0 250.1L194.0 251.7L195.0 253.3L196.0 254.9L197.0 256.6L198.0 258.2L199.0 259.8L200.0 261.5L201.0 263.0L202.0 264.5L203.0 265.9L204.0 267.1L205.0 268.3L206.0 269.3L207.0 270.2L208.0 270.9L209.0 271.4L210.0 271.8L211.0 272.0L212.0 272.0L213.0 271.8L214.0 271.5L215.0 270.9L216.0 270.3L217.0 269.4L218.0 268.4L219.0 267.3L220.0 266.0L221.0 264.6L222.0 263.2L223.0 261.6L224.0 260.0L225.0 258.4L226.0 256.7L227.0 255.1L228.0 253.5L229.0 251.9L230.0 250.3L231.0 248.8L232.0 247.5L233.0 246.2L234.0 245.1L235.0 244.0L236.0 243.2L237.0 242.5L238.0 242.0L239.0 241.6L240.0 241.4L241.0 241.4L242.0 241.6L243.0 242.0L244.0 242.5L245.0 243.2L246.0 244.0L247.0 245.1L248.0 246.2L249.0 247.5L250.0 248.8L251.0 250.3L252.0 251.9L253.0 253.5L254.0 255.1L255.0 256.7L256.0 258.4L257.0 260.0L258.0 261.6L259.0 263.2L260.0 264.6L261.0 266.0L262.0 267.3L263.0 268.4L264.0 269.4L265.0 270.3L266.0 270.9L267.0 271.5L268.0 271.8L269.0 272.0L270.0 272.0L271.0 271.8L272.0 271.4L273.0 270.9L274.0 270.2L275.0 269.3L276.0 268.3L277.0 267.1L278.0 265.9L279.0 264.5L280.0 263.0L281.0 261.5L282.0 259.8L283.0 258.2L284.0 256.6L285.0 254.9L286.0 253.3L287.0 251.7L288.0 250.1L289.0 248.7L290.0 247.3L291.0 246.1L292.0 244.9L293.0 243.9L294.0 243.1L295.0 242.4L296.0 241.9L297.0 241.6L298.0 241.4L299.0 241.4L300.0 241.6L301.0 242.0L302.0 242.6L303.0 243.3L304.0 244.2L305.0 245.2L306.0 246.3L307.0 247.6L308.0 249.0L309.0 250.5L310.0 252.0L311.0 253.6L312.0 255.3L313.0 256.9L314.0 258.6L315.0 260.2L316.0 261.8L317.0 263.4L318.0 264.8L319.0 266.2L320.0 267.4L321.0 268.5L322.0 269.5L323.0 270.3L324.0 271.0L325.0 271.5L326.0 271.8L327.0 272.0L328.0 272.0L329.0 271.7L330.0 271.4L331.0 270.8L332.0 270.1L333.0 269.2L334.0 268.2L335.0 267.0L336.0 265.7L337.0 264.3L338.0 262.8L339.0 261.3L340.0 259.7L341.0 258.0L342.0 256.4L343.0 254.7L344.0 253.1L345.0 251.5L346.0 249.9L347.0 248.5L348.0 247.1L349.0 245.9L350.0 244.8L351.0 243.8L352.0 243.0L353.0 242.3L354.0 241.9L355.0 241.5L356.0 241.4L357.0 241.4L358.0 241.7L359.0 242.1L360.0 242.6L361.0 243.4L362.0 244.3L363.0 245.3L364.0 246.5L365.0 247.8L366.0 249.2L367.0 250.7L368.0 252.2L369.0 253.8L370.0 255.5L371.0 257.1L372.0 258.8L373.0 260.4L374.0 262.0L375.0 263.5L376.0 265.0L377.0 266.3L378.0 267.6L379.0 268.7L380.0 269.6L381.0 270.4L382.0 271.1L383.0 271.6L384.0 271.9L385.0 272.0L386.0 271.9L387.0 271.7L388.0 271.3L389.0 270.7L390.0 270.0L391.0 269.1L392.0 268.0L393.0 266.8L394.0 265.5L395.0 264.1L396.0 262.6L397.0 261.1L398.0 259.5L399.0 257.8L400.0 256.2L401.0 254.5L402.0 252.9L403.0 251.3L404.0 249.8L405.0 248.3L406.0 247.0L407.0 245.8L408.0 244.7L409.0 243.7L410.0 242.9L411.0 242.3L412.0 241.8L413.0 241.5L414.0 241.4L415.0 241.5L416.0 241.7L417.0 242.1L418.0 242.7L419.0 243.5L420.0 244.4L421.0 245.4L422.0 246.6L423.0 247.9L424.0 249.4L425.0 250.9L426.0 252.4L427.0 254.0L428.0 255.7L429.0 257.3L430.0 259.0L431.0 260.6L432.0 262.2L433.0 263.7L434.0 265.2L435.0 266.5L436.0 267.7L437.0 268.8L438.0 269.7L439.0 270.5L440.0 271.2L441.0 271.6L442.0 271.9L443.0 272.0L444.0 271.9L445.0 271.7L446.0 271.2L447.0 270.6L448.0 269.9L449.0 268.9L450.0 267.9L451.0 266.7L452.0 265.4L453.0 264.0L454.0 262.5L455.0 260.9L456.0 259.3L457.0 257.6L458.0 256.0L459.0 254.3L460.0 252.7L461.0 251.1L462.0 249.6L463.0 248.2L464.0 246.8L465.0 245.6L466.0 244.6L467.0 243.6L468.0 242.8L469.0 242.2L470.0 241.8L471.0 241.5L472.0 241.4L473.0 241.5L474.0 241.8L475.0 242.2L476.0 242.8L477.0 243.6L478.0 244.5L479.0 245.6L480.0 246.8L481.0 248.1L482.0 249.5L483.0 251.0L484.0 252.6L485.0 254.2L486.0 255.9L487.0 257.5L488.0 259.2L489.0 260.8L490.0 262.4L491.0 263.9L492.0 265.3L493.0 266.6L494.0 267.8L495.0 268.9L496.0 269.8L497.0 270.6L498.0 271.2L499.0 271.7L500.0 271.9L501.0 272.0L502.0 271.9L503.0 271.6L504.0 271.2L505.0 270.6L506.0 269.8L507.0 268.8L508.0 267.7L509.0 266.5L510.0 265.2L511.0 263.8L512.0 262.3L513.0 260.7L514.0 259.1L515.0 257.4L516.0 255.8L517.0 254.1L518.0 252.5L519.0 250.9L520.0 249.4L521.0 248.0L522.0 246.7L523.0 245.5L524.0 244.4L525.0 243.5L526.0 242.8L527.0 242.2L528.0 241.7L529.0 241.5L530.0 241.4L531.0 241.5L532.0 241.8L533.0 242.3L534.0 242.9L535.0 243.7L536.0 244.6L537.0 245.7L538.0 246.9L539.0 248.3L540.0 249.7L541.0 251.2L542.0 252.8L543.0 254.4L544.0 256.1L545.0 257.7L546.0 259.4L547.0 261.0L548.0 262.6L549.0 264.1L550.0 265.5L551.0 266.8L552.0 268.0L553.0 269.0L554.0 269.9L555.0 270.7L556.0 271.3L557.0 271.7L558.0 271.9L559.0 272.0L560.0 271.9L561.0 271.6L562.0 271.1L563.0 270.5L564.0 269.7L565.0 268.7L566.0 267.6L567.0 266.4L568.0 265.0L569.0 263.6L570.0 262.1L571.0 260.5L572.0 258.9L573.0 257.2L574.0 255.6L575.0 253.9L576.0 252.3L577.0 250.7L578.0 249.2L579.0 247.8L580.0 246.5L581.0 245.4L582.0 244.3L583.0 243.4L584.0 242.7L585.0 242.1L586.0 241.7L587.0 241.5L588.0 241.4L589.0 241.5L590.0 241.8L591.0 242.3L592.0 243.0L593.0 243.8L594.0 244.8L595.0 245.9L596.0 247.1L597.0 248.4L598.0 249.9L599.0 251.4L600.0 253.0L601.0 254.6L602.0 256.3L603.0 257.9L604.0 259.6L605.0 261.2L606.0 262.8L607.0 264.2L608.0 265.6L609.0 266.9L610.0 268.1L611.0 269.1L612.0 270.0L613.0 270.8L614.0 271.3L615.0 271.7L616.0 272.0L617.0 272.0L618.0 271.9L619.0 271.5L620.0 271.0L621.0 270.4L622.0 269.6L623.0 268.6L624.0 267.5L625.0 266.2L626.0 264.9L627.0 263.4L628.0 261.9L629.0 260.3L630.0 258.7L631.0 257.0L632.0 255.4L633.0 253.7L634.0 252.1L635.0 250.6L636.0 249.1L637.0 247.7L638.0 246.4L639.0 245.2L640.0 244.2L641.0 243.3L642.0 242.6L643.0 242.0L644.0 241.6L645.0 241.4L646.0 241.4L647.0 241.6L648.0 241.9L649.0 242.4L650.0 243.1L651.0 243.9L652.0 244.9L653.0 246.0L654.0 247.3L655.0 248.6L656.0 250.1L657.0 251.6L658.0 253.2L659.0 254.8L660.0 256.5L661.0 258.1L662.0 259.8L663.0 261.4L664.0 262.9L665.0 264.4L666.0 265.8L667.0 267.1L668.0 268.2L669.0 269.3L670.0 270.1L671.0 270.8L672.0 271.4L673.0 271.8L674.0 272.0L675.0 272.0L676.0 271.8L677.0 271.5L678.0 271.0L679.0 270.3L680.0 269.4L681.0 268.5L682.0 267.3L683.0 266.1L684.0 264.7L685.0 263.2L686.0 261.7L687.0 260.1L688.0 258.5L689.0 256.8L690.0 255.2L691.0 253.5L692.0 251.9L693.0 250.4L694.0 248.9L695.0 247.5L696.0 246.2L697.0 245.1L698.0 244.1L699.0 243.2L700.0 242.5L701.0 242.0L702.0 241.6L703.0 241.4L704.0 241.4L705.0 241.6L706.0 241.9L707.0 242.5L708.0 243.2L709.0 244.0L710.0 245.0L711.0 246.1L712.0 247.4L713.0 248.8L714.0 250.2L715.0 251.8L716.0 253.4L717.0 255.0L718.0 256.7L719.0 258.3L720.0 260.0L721.0 261.6L722.0 263.1L723.0 264.6L724.0 266.0L725.0 267.2L726.0 268.4L727.0 269.4L728.0 270.2L729.0 270.9L730.0 271.4L731.0 271.8L732.0 272.0L733.0 272.0L734.0 271.8L735.0 271.4L736.0 270.9L737.0 270.2L738.0 269.3L739.0 268.3L740.0 267.2L741.0 265.9L742.0 264.5L743.0 263.1L744.0 261.5L745.0 259.9L746.0 258.3L747.0 256.6L748.0 255.0L749.0 253.3L750.0 251.7L751.0 250.2L752.0 248.7L753.0 247.4L754.0 246.1L755.0 245.0L756.0 244.0L757.0 243.1L758.0 242.4L759.0 241.9L760.0 241.6L761.0 241.4L762.0 241.4L763.0 241.6L764.0 242.0" fill="none" stroke="#d2692c" stroke-width="1.3" stroke-linejoin="round"/><path d="M187.0 318.6L188.0 318.1L189.0 317.5L190.0 316.8L191.0 315.8L192.0 314.8L193.0 313.6L194.0 312.3L195.0 310.9L196.0 309.4L197.0 307.8L198.0 306.2L199.0 304.6L200.0 302.9L201.0 301.3L202.0 299.7L203.0 298.1L204.0 296.6L205.0 295.2L206.0 293.9L207.0 292.7L208.0 291.6L209.0 290.7L210.0 289.9L211.0 289.3L212.0 288.9L213.0 288.6L214.0 288.5L215.0 288.6L216.0 288.9L217.0 289.3L218.0 289.9L219.0 290.7L220.0 291.6L221.0 292.7L222.0 293.9L223.0 295.2L224.0 296.6L225.0 298.1L226.0 299.7L227.0 301.3L228.0 302.9L229.0 304.6L230.0 306.2L231.0 307.8L232.0 309.4L233.0 310.9L234.0 312.3L235.0 313.6L236.0 314.8L237.0 315.8L238.0 316.8L239.0 317.5L240.0 318.1L241.0 318.6L242.0 318.8L243.0 318.9L244.0 318.8L245.0 318.5L246.0 318.1L247.0 317.4L248.0 316.7L249.0 315.7L250.0 314.7L251.0 313.4L252.0 312.1L253.0 310.7L254.0 309.2L255.0 307.6L256.0 306.0L257.0 304.4L258.0 302.7L259.0 301.1L260.0 299.5L261.0 297.9L262.0 296.4L263.0 295.0L264.0 293.7L265.0 292.5L266.0 291.5L267.0 290.6L268.0 289.8L269.0 289.2L270.0 288.8L271.0 288.6L272.0 288.5L273.0 288.6L274.0 288.9L275.0 289.4L276.0 290.0L277.0 290.8L278.0 291.7L279.0 292.8L280.0 294.0L281.0 295.4L282.0 296.8L283.0 298.3L284.0 299.9L285.0 301.5L286.0 303.1L287.0 304.8L288.0 306.4L289.0 308.0L290.0 309.6L291.0 311.1L292.0 312.4L293.0 313.7L294.0 314.9L295.0 316.0L296.0 316.9L297.0 317.6L298.0 318.2L299.0 318.6L300.0 318.8L301.0 318.9L302.0 318.8L303.0 318.5L304.0 318.0L305.0 317.4L306.0 316.6L307.0 315.6L308.0 314.5L309.0 313.3L310.0 312.0L311.0 310.5L312.0 309.0L313.0 307.4L314.0 305.8L315.0 304.2L316.0 302.5L317.0 300.9L318.0 299.3L319.0 297.7L320.0 296.3L321.0 294.9L322.0 293.6L323.0 292.4L324.0 291.4L325.0 290.5L326.0 289.7L327.0 289.2L328.0 288.8L329.0 288.6L330.0 288.5L331.0 288.6L332.0 288.9L333.0 289.4L334.0 290.1L335.0 290.9L336.0 291.9L337.0 293.0L338.0 294.2L339.0 295.5L340.0 297.0L341.0 298.5L342.0 300.1L343.0 301.7L344.0 303.3L345.0 305.0L346.0 306.6L347.0 308.2L348.0 309.7L349.0 311.2L350.0 312.6L351.0 313.9L352.0 315.1L353.0 316.1L354.0 317.0L355.0 317.7L356.0 318.3L357.0 318.6L358.0 318.9L359.0 318.9L360.0 318.7L361.0 318.4L362.0 317.9L363.0 317.3L364.0 316.5L365.0 315.5L366.0 314.4L367.0 313.1L368.0 311.8L369.0 310.3L370.0 308.8L371.0 307.2L372.0 305.6L373.0 304.0L374.0 302.3L375.0 300.7L376.0 299.1L377.0 297.6L378.0 296.1L379.0 294.7L380.0 293.4L381.0 292.3L382.0 291.3L383.0 290.4L384.0 289.7L385.0 289.1L386.0 288.7L387.0 288.5L388.0 288.5L389.0 288.7L390.0 289.0L391.0 289.5L392.0 290.2L393.0 291.0L394.0 292.0L395.0 293.1L396.0 294.3L397.0 295.7L398.0 297.1L399.0 298.7L400.0 300.2L401.0 301.9L402.0 303.5L403.0 305.2L404.0 306.8L405.0 308.4L406.0 309.9L407.0 311.4L408.0 312.8L409.0 314.0L410.0 315.2L411.0 316.2L412.0 317.1L413.0 317.8L414.0 318.3L415.0 318.7L416.0 318.9L417.0 318.9L418.0 318.7L419.0 318.4L420.0 317.9L421.0 317.2L422.0 316.3L423.0 315.4L424.0 314.2L425.0 313.0L426.0 311.6L427.0 310.2L428.0 308.6L429.0 307.1L430.0 305.4L431.0 303.8L432.0 302.1L433.0 300.5L434.0 298.9L435.0 297.4L436.0 295.9L437.0 294.6L438.0 293.3L439.0 292.2L440.0 291.1L441.0 290.3L442.0 289.6L443.0 289.1L444.0 288.7L445.0 288.5L446.0 288.5L447.0 288.7L448.0 289.0L449.0 289.6L450.0 290.3L451.0 291.1L452.0 292.1L453.0 293.2L454.0 294.5L455.0 295.9L456.0 297.3L457.0 298.9L458.0 300.4L459.0 302.1L460.0 303.7L461.0 305.4L462.0 307.0L463.0 308.6L464.0 310.1L465.0 311.6L466.0 312.9L467.0 314.2L468.0 315.3L469.0 316.3L470.0 317.2L471.0 317.8L472.0 318.4L473.0 318.7L474.0 318.9L475.0 318.9L476.0 318.7L477.0 318.3L478.0 317.8L479.0 317.1L480.0 316.2L481.0 315.2L482.0 314.1L483.0 312.8L484.0 311.5L485.0 310.0L486.0 308.5L487.0 306.9L488.0 305.2L489.0 303.6L490.0 301.9L491.0 300.3L492.0 298.7L493.0 297.2L494.0 295.8L495.0 294.4L496.0 293.1L497.0 292.0L498.0 291.0L499.0 290.2L500.0 289.5L501.0 289.0L502.0 288.7L503.0 288.5L504.0 288.5L505.0 288.7L506.0 289.1L507.0 289.6L508.0 290.4L509.0 291.2L510.0 292.2L511.0 293.4L512.0 294.7L513.0 296.0L514.0 297.5L515.0 299.0L516.0 300.6L517.0 302.3L518.0 303.9L519.0 305.6L520.0 307.2L521.0 308.8L522.0 310.3L523.0 311.7L524.0 313.1L525.0 314.3L526.0 315.4L527.0 316.4L528.0 317.2L529.0 317.9L530.0 318.4L531.0 318.7L532.0 318.9L533.0 318.9L534.0 318.7L535.0 318.3L536.0 317.7L537.0 317.0L538.0 316.1L539.0 315.1L540.0 313.9L541.0 312.7L542.0 311.3L543.0 309.8L544.0 308.3L545.0 306.7L546.0 305.0L547.0 303.4L548.0 301.7L549.0 300.1L550.0 298.5L551.0 297.0L552.0 295.6L553.0 294.2L554.0 293.0L555.0 291.9L556.0 290.9L557.0 290.1L558.0 289.5L559.0 289.0L560.0 288.6L561.0 288.5L562.0 288.5L563.0 288.8L564.0 289.2L565.0 289.7L566.0 290.5L567.0 291.3L568.0 292.4L569.0 293.5L570.0 294.8L571.0 296.2L572.0 297.7L573.0 299.2L574.0 300.8L575.0 302.5L576.0 304.1L577.0 305.8L578.0 307.4L579.0 309.0L580.0 310.5L581.0 311.9L582.0 313.2L583.0 314.5L584.0 315.6L585.0 316.5L586.0 317.3L587.0 318.0L588.0 318.5L589.0 318.8L590.0 318.9L591.0 318.8L592.0 318.6L593.0 318.2L594.0 317.6L595.0 316.9L596.0 316.0L597.0 315.0L598.0 313.8L599.0 312.5L600.0 311.1L601.0 309.6L602.0 308.1L603.0 306.5L604.0 304.8L605.0 303.2L606.0 301.5L607.0 299.9L608.0 298.4L609.0 296.8L610.0 295.4L611.0 294.1L612.0 292.9L613.0 291.8L614.0 290.8L615.0 290.0L616.0 289.4L617.0 288.9L618.0 288.6L619.0 288.5L620.0 288.6L621.0 288.8L622.0 289.2L623.0 289.8L624.0 290.6L625.0 291.5L626.0 292.5L627.0 293.7L628.0 295.0L629.0 296.4L630.0 297.9L631.0 299.4L632.0 301.0L633.0 302.7L634.0 304.3L635.0 306.0L636.0 307.6L637.0 309.1L638.0 310.6L639.0 312.1L640.0 313.4L641.0 314.6L642.0 315.7L643.0 316.6L644.0 317.4L645.0 318.0L646.0 318.5L647.0 318.8L648.0 318.9L649.0 318.8L650.0 318.6L651.0 318.2L652.0 317.6L653.0 316.8L654.0 315.9L655.0 314.8L656.0 313.6L657.0 312.3L658.0 310.9L659.0 309.4L660.0 307.9L661.0 306.3L662.0 304.6L663.0 303.0L664.0 301.3L665.0 299.7L666.0 298.2L667.0 296.7L668.0 295.3L669.0 293.9L670.0 292.7L671.0 291.7L672.0 290.7L673.0 289.9L674.0 289.3L675.0 288.9L676.0 288.6L677.0 288.5L678.0 288.6L679.0 288.8L680.0 289.3L681.0 289.9L682.0 290.7L683.0 291.6L684.0 292.6L685.0 293.8L686.0 295.1L687.0 296.6L688.0 298.0L689.0 299.6L690.0 301.2L691.0 302.9L692.0 304.5L693.0 306.1L694.0 307.8L695.0 309.3L696.0 310.8L697.0 312.2L698.0 313.5L699.0 314.7L700.0 315.8L701.0 316.7L702.0 317.5L703.0 318.1L704.0 318.6L705.0 318.8L706.0 318.9L707.0 318.8L708.0 318.5L709.0 318.1L710.0 317.5L711.0 316.7L712.0 315.8L713.0 314.7L714.0 313.5L715.0 312.2L716.0 310.8L717.0 309.3L718.0 307.7L719.0 306.1L720.0 304.4L721.0 302.8L722.0 301.2L723.0 299.5L724.0 298.0L725.0 296.5L726.0 295.1L727.0 293.8L728.0 292.6L729.0 291.5L730.0 290.6L731.0 289.9L732.0 289.3L733.0 288.8L734.0 288.6L735.0 288.5L736.0 288.6L737.0 288.9L738.0 289.3L739.0 290.0L740.0 290.8L741.0 291.7L742.0 292.8L743.0 294.0L744.0 295.3L745.0 296.7L746.0 298.2L747.0 299.8L748.0 301.4L749.0 303.1L750.0 304.7L751.0 306.3L752.0 307.9L753.0 309.5L754.0 311.0L755.0 312.4L756.0 313.7L757.0 314.9L758.0 315.9L759.0 316.8L760.0 317.6L761.0 318.2L762.0 318.6L763.0 318.8L764.0 318.9" fill="none" stroke="#8cbb0c" stroke-width="1.3" stroke-linejoin="round"/><path d="M187.0 337.1L188.0 337.9L189.0 338.9L190.0 340.1L191.0 341.3L192.0 342.7L193.0 344.1L194.0 345.7L195.0 347.3L196.0 348.9L197.0 350.6L198.0 352.2L199.0 353.8L200.0 355.5L201.0 357.0L202.0 358.5L203.0 359.9L204.0 361.1L205.0 362.3L206.0 363.3L207.0 364.2L208.0 364.9L209.0 365.4L210.0 365.8L211.0 366.0L212.0 366.0L213.0 365.8L214.0 365.5L215.0 364.9L216.0 364.3L217.0 363.4L218.0 362.4L219.0 361.3L220.0 360.0L221.0 358.6L222.0 357.2L223.0 355.6L224.0 354.0L225.0 352.4L226.0 350.7L227.0 349.1L228.0 347.5L229.0 345.9L230.0 344.3L231.0 342.8L232.0 341.5L233.0 340.2L234.0 339.1L235.0 338.0L236.0 337.2L237.0 336.5L238.0 336.0L239.0 335.6L240.0 335.4L241.0 335.4L242.0 335.6L243.0 336.0L244.0 336.5L245.0 337.2L246.0 338.0L247.0 339.1L248.0 340.2L249.0 341.5L250.0 342.8L251.0 344.3L252.0 345.9L253.0 347.5L254.0 349.1L255.0 350.7L256.0 352.4L257.0 354.0L258.0 355.6L259.0 357.2L260.0 358.6L261.0 360.0L262.0 361.3L263.0 362.4L264.0 363.4L265.0 364.3L266.0 364.9L267.0 365.5L268.0 365.8L269.0 366.0L270.0 366.0L271.0 365.8L272.0 365.4L273.0 364.9L274.0 364.2L275.0 363.3L276.0 362.3L277.0 361.1L278.0 359.9L279.0 358.5L280.0 357.0L281.0 355.5L282.0 353.8L283.0 352.2L284.0 350.6L285.0 348.9L286.0 347.3L287.0 345.7L288.0 344.1L289.0 342.7L290.0 341.3L291.0 340.1L292.0 338.9L293.0 337.9L294.0 337.1L295.0 336.4L296.0 335.9L297.0 335.6L298.0 335.4L299.0 335.4L300.0 335.6L301.0 336.0L302.0 336.6L303.0 337.3L304.0 338.2L305.0 339.2L306.0 340.3L307.0 341.6L308.0 343.0L309.0 344.5L310.0 346.0L311.0 347.6L312.0 349.3L313.0 350.9L314.0 352.6L315.0 354.2L316.0 355.8L317.0 357.4L318.0 358.8L319.0 360.2L320.0 361.4L321.0 362.5L322.0 363.5L323.0 364.3L324.0 365.0L325.0 365.5L326.0 365.8L327.0 366.0L328.0 366.0L329.0 365.7L330.0 365.4L331.0 364.8L332.0 364.1L333.0 363.2L334.0 362.2L335.0 361.0L336.0 359.7L337.0 358.3L338.0 356.8L339.0 355.3L340.0 353.7L341.0 352.0L342.0 350.4L343.0 348.7L344.0 347.1L345.0 345.5L346.0 343.9L347.0 342.5L348.0 341.1L349.0 339.9L350.0 338.8L351.0 337.8L352.0 337.0L353.0 336.3L354.0 335.9L355.0 335.5L356.0 335.4L357.0 335.4L358.0 335.7L359.0 336.1L360.0 336.6L361.0 337.4L362.0 338.3L363.0 339.3L364.0 340.5L365.0 341.8L366.0 343.2L367.0 344.7L368.0 346.2L369.0 347.8L370.0 349.5L371.0 351.1L372.0 352.8L373.0 354.4L374.0 356.0L375.0 357.5L376.0 359.0L377.0 360.3L378.0 361.6L379.0 362.7L380.0 363.6L381.0 364.4L382.0 365.1L383.0 365.6L384.0 365.9L385.0 366.0L386.0 365.9L387.0 365.7L388.0 365.3L389.0 364.7L390.0 364.0L391.0 363.1L392.0 362.0L393.0 360.8L394.0 359.5L395.0 358.1L396.0 356.6L397.0 355.1L398.0 353.5L399.0 351.8L400.0 350.2L401.0 348.5L402.0 346.9L403.0 345.3L404.0 343.8L405.0 342.3L406.0 341.0L407.0 339.8L408.0 338.7L409.0 337.7L410.0 336.9L411.0 336.3L412.0 335.8L413.0 335.5L414.0 335.4L415.0 335.5L416.0 335.7L417.0 336.1L418.0 336.7L419.0 337.5L420.0 338.4L421.0 339.4L422.0 340.6L423.0 341.9L424.0 343.4L425.0 344.9L426.0 346.4L427.0 348.0L428.0 349.7L429.0 351.3L430.0 353.0L431.0 354.6L432.0 356.2L433.0 357.7L434.0 359.2L435.0 360.5L436.0 361.7L437.0 362.8L438.0 363.7L439.0 364.5L440.0 365.2L441.0 365.6L442.0 365.9L443.0 366.0L444.0 365.9L445.0 365.7L446.0 365.2L447.0 364.6L448.0 363.9L449.0 362.9L450.0 361.9L451.0 360.7L452.0 359.4L453.0 358.0L454.0 356.5L455.0 354.9L456.0 353.3L457.0 351.6L458.0 350.0L459.0 348.3L460.0 346.7L461.0 345.1L462.0 343.6L463.0 342.2L464.0 340.8L465.0 339.6L466.0 338.6L467.0 337.6L468.0 336.8L469.0 336.2L470.0 335.8L471.0 335.5L472.0 335.4L473.0 335.5L474.0 335.8L475.0 336.2L476.0 336.8L477.0 337.6L478.0 338.5L479.0 339.6L480.0 340.8L481.0 342.1L482.0 343.5L483.0 345.0L484.0 346.6L485.0 348.2L486.0 349.9L487.0 351.5L488.0 353.2L489.0 354.8L490.0 356.4L491.0 357.9L492.0 359.3L493.0 360.6L494.0 361.8L495.0 362.9L496.0 363.8L497.0 364.6L498.0 365.2L499.0 365.7L500.0 365.9L501.0 366.0L502.0 365.9L503.0 365.6L504.0 365.2L505.0 364.6L506.0 363.8L507.0 362.8L508.0 361.7L509.0 360.5L510.0 359.2L511.0 357.8L512.0 356.3L513.0 354.7L514.0 353.1L515.0 351.4L516.0 349.8L517.0 348.1L518.0 346.5L519.0 344.9L520.0 343.4L521.0 342.0L522.0 340.7L523.0 339.5L524.0 338.4L525.0 337.5L526.0 336.8L527.0 336.2L528.0 335.7L529.0 335.5L530.0 335.4L531.0 335.5L532.0 335.8L533.0 336.3L534.0 336.9L535.0 337.7L536.0 338.6L537.0 339.7L538.0 340.9L539.0 342.3L540.0 343.7L541.0 345.2L542.0 346.8L543.0 348.4L544.0 350.1L545.0 351.7L546.0 353.4L547.0 355.0L548.0 356.6L549.0 358.1L550.0 359.5L551.0 360.8L552.0 362.0L553.0 363.0L554.0 363.9L555.0 364.7L556.0 365.3L557.0 365.7L558.0 365.9L559.0 366.0L560.0 365.9L561.0 365.6L562.0 365.1L563.0 364.5L564.0 363.7L565.0 362.7L566.0 361.6L567.0 360.4L568.0 359.0L569.0 357.6L570.0 356.1L571.0 354.5L572.0 352.9L573.0 351.2L574.0 349.6L575.0 347.9L576.0 346.3L577.0 344.7L578.0 343.2L579.0 341.8L580.0 340.5L581.0 339.4L582.0 338.3L583.0 337.4L584.0 336.7L585.0 336.1L586.0 335.7L587.0 335.5L588.0 335.4L589.0 335.5L590.0 335.8L591.0 336.3L592.0 337.0L593.0 337.8L594.0 338.8L595.0 339.9L596.0 341.1L597.0 342.4L598.0 343.9L599.0 345.4L600.0 347.0L601.0 348.6L602.0 350.3L603.0 351.9L604.0 353.6L605.0 355.2L606.0 356.8L607.0 358.2L608.0 359.6L609.0 360.9L610.0 362.1L611.0 363.1L612.0 364.0L613.0 364.8L614.0 365.3L615.0 365.7L616.0 366.0L617.0 366.0L618.0 365.9L619.0 365.5L620.0 365.0L621.0 364.4L622.0 363.6L623.0 362.6L624.0 361.5L625.0 360.2L626.0 358.9L627.0 357.4L628.0 355.9L629.0 354.3L630.0 352.7L631.0 351.0L632.0 349.4L633.0 347.7L634.0 346.1L635.0 344.6L636.0 343.1L637.0 341.7L638.0 340.4L639.0 339.2L640.0 338.2L641.0 337.3L642.0 336.6L643.0 336.0L644.0 335.6L645.0 335.4L646.0 335.4L647.0 335.6L648.0 335.9L649.0 336.4L650.0 337.1L651.0 337.9L652.0 338.9L653.0 340.0L654.0 341.3L655.0 342.6L656.0 344.1L657.0 345.6L658.0 347.2L659.0 348.8L660.0 350.5L661.0 352.1L662.0 353.8L663.0 355.4L664.0 356.9L665.0 358.4L666.0 359.8L667.0 361.1L668.0 362.2L669.0 363.3L670.0 364.1L671.0 364.8L672.0 365.4L673.0 365.8L674.0 366.0L675.0 366.0L676.0 365.8L677.0 365.5L678.0 365.0L679.0 364.3L680.0 363.4L681.0 362.5L682.0 361.3L683.0 360.1L684.0 358.7L685.0 357.2L686.0 355.7L687.0 354.1L688.0 352.5L689.0 350.8L690.0 349.2L691.0 347.5L692.0 345.9L693.0 344.4L694.0 342.9L695.0 341.5L696.0 340.2L697.0 339.1L698.0 338.1L699.0 337.2L700.0 336.5L701.0 336.0L702.0 335.6L703.0 335.4L704.0 335.4L705.0 335.6L706.0 335.9L707.0 336.5L708.0 337.2L709.0 338.0L710.0 339.0L711.0 340.1L712.0 341.4L713.0 342.8L714.0 344.2L715.0 345.8L716.0 347.4L717.0 349.0L718.0 350.7L719.0 352.3L720.0 354.0L721.0 355.6L722.0 357.1L723.0 358.6L724.0 360.0L725.0 361.2L726.0 362.4L727.0 363.4L728.0 364.2L729.0 364.9L730.0 365.4L731.0 365.8L732.0 366.0L733.0 366.0L734.0 365.8L735.0 365.4L736.0 364.9L737.0 364.2L738.0 363.3L739.0 362.3L740.0 361.2L741.0 359.9L742.0 358.5L743.0 357.1L744.0 355.5L745.0 353.9L746.0 352.3L747.0 350.6L748.0 349.0L749.0 347.3L750.0 345.7L751.0 344.2L752.0 342.7L753.0 341.4L754.0 340.1L755.0 339.0L756.0 338.0L757.0 337.1L758.0 336.4L759.0 335.9L760.0 335.6L761.0 335.4L762.0 335.4L763.0 335.6L764.0 336.0" fill="none" stroke="#14b8a8" stroke-width="1.3" stroke-linejoin="round"/><path d="M187.0 412.0L188.0 411.5L189.0 410.9L190.0 410.2L191.0 409.2L192.0 408.2L193.0 407.0L194.0 405.6L195.0 404.2L196.0 402.7L197.0 401.1L198.0 399.5L199.0 397.9L200.0 396.2L201.0 394.6L202.0 392.9L203.0 391.4L204.0 389.9L205.0 388.4L206.0 387.1L207.0 385.9L208.0 384.8L209.0 383.9L210.0 383.1L211.0 382.5L212.0 382.1L213.0 381.8L214.0 381.7L215.0 381.8L216.0 382.1L217.0 382.5L218.0 383.1L219.0 383.9L220.0 384.8L221.0 385.9L222.0 387.1L223.0 388.4L224.0 389.9L225.0 391.4L226.0 392.9L227.0 394.6L228.0 396.2L229.0 397.9L230.0 399.5L231.0 401.1L232.0 402.7L233.0 404.2L234.0 405.6L235.0 407.0L236.0 408.2L237.0 409.2L238.0 410.2L239.0 410.9L240.0 411.5L241.0 412.0L242.0 412.2L243.0 412.3L244.0 412.2L245.0 411.9L246.0 411.5L247.0 410.8L248.0 410.0L249.0 409.1L250.0 408.0L251.0 406.8L252.0 405.5L253.0 404.0L254.0 402.5L255.0 401.0L256.0 399.3L257.0 397.7L258.0 396.0L259.0 394.4L260.0 392.8L261.0 391.2L262.0 389.7L263.0 388.3L264.0 387.0L265.0 385.8L266.0 384.7L267.0 383.8L268.0 383.0L269.0 382.4L270.0 382.0L271.0 381.8L272.0 381.7L273.0 381.8L274.0 382.1L275.0 382.6L276.0 383.2L277.0 384.0L278.0 385.0L279.0 386.0L280.0 387.3L281.0 388.6L282.0 390.0L283.0 391.6L284.0 393.1L285.0 394.8L286.0 396.4L287.0 398.1L288.0 399.7L289.0 401.3L290.0 402.9L291.0 404.4L292.0 405.8L293.0 407.1L294.0 408.3L295.0 409.3L296.0 410.3L297.0 411.0L298.0 411.6L299.0 412.0L300.0 412.2L301.0 412.3L302.0 412.2L303.0 411.9L304.0 411.4L305.0 410.8L306.0 409.9L307.0 409.0L308.0 407.9L309.0 406.7L310.0 405.3L311.0 403.9L312.0 402.3L313.0 400.8L314.0 399.1L315.0 397.5L316.0 395.8L317.0 394.2L318.0 392.6L319.0 391.0L320.0 389.5L321.0 388.1L322.0 386.8L323.0 385.6L324.0 384.6L325.0 383.7L326.0 383.0L327.0 382.4L328.0 382.0L329.0 381.8L330.0 381.7L331.0 381.8L332.0 382.2L333.0 382.6L334.0 383.3L335.0 384.1L336.0 385.1L337.0 386.2L338.0 387.4L339.0 388.8L340.0 390.2L341.0 391.7L342.0 393.3L343.0 395.0L344.0 396.6L345.0 398.3L346.0 399.9L347.0 401.5L348.0 403.1L349.0 404.6L350.0 406.0L351.0 407.3L352.0 408.4L353.0 409.5L354.0 410.4L355.0 411.1L356.0 411.6L357.0 412.0L358.0 412.3L359.0 412.3L360.0 412.1L361.0 411.8L362.0 411.3L363.0 410.7L364.0 409.8L365.0 408.9L366.0 407.7L367.0 406.5L368.0 405.1L369.0 403.7L370.0 402.2L371.0 400.6L372.0 398.9L373.0 397.3L374.0 395.6L375.0 394.0L376.0 392.4L377.0 390.8L378.0 389.3L379.0 388.0L380.0 386.7L381.0 385.5L382.0 384.5L383.0 383.6L384.0 382.9L385.0 382.3L386.0 381.9L387.0 381.7L388.0 381.7L389.0 381.9L390.0 382.2L391.0 382.7L392.0 383.4L393.0 384.2L394.0 385.2L395.0 386.3L396.0 387.6L397.0 388.9L398.0 390.4L399.0 391.9L400.0 393.5L401.0 395.2L402.0 396.8L403.0 398.5L404.0 400.1L405.0 401.7L406.0 403.3L407.0 404.7L408.0 406.1L409.0 407.4L410.0 408.6L411.0 409.6L412.0 410.4L413.0 411.2L414.0 411.7L415.0 412.1L416.0 412.3L417.0 412.3L418.0 412.1L419.0 411.8L420.0 411.3L421.0 410.6L422.0 409.7L423.0 408.7L424.0 407.6L425.0 406.3L426.0 405.0L427.0 403.5L428.0 402.0L429.0 400.4L430.0 398.7L431.0 397.1L432.0 395.4L433.0 393.8L434.0 392.2L435.0 390.6L436.0 389.2L437.0 387.8L438.0 386.5L439.0 385.4L440.0 384.4L441.0 383.5L442.0 382.8L443.0 382.3L444.0 381.9L445.0 381.7L446.0 381.7L447.0 381.9L448.0 382.3L449.0 382.8L450.0 383.5L451.0 384.3L452.0 385.3L453.0 386.5L454.0 387.7L455.0 389.1L456.0 390.6L457.0 392.1L458.0 393.7L459.0 395.4L460.0 397.0L461.0 398.7L462.0 400.3L463.0 401.9L464.0 403.5L465.0 404.9L466.0 406.3L467.0 407.6L468.0 408.7L469.0 409.7L470.0 410.5L471.0 411.2L472.0 411.8L473.0 412.1L474.0 412.3L475.0 412.3L476.0 412.1L477.0 411.7L478.0 411.2L479.0 410.5L480.0 409.6L481.0 408.6L482.0 407.5L483.0 406.2L484.0 404.8L485.0 403.3L486.0 401.8L487.0 400.2L488.0 398.5L489.0 396.9L490.0 395.2L491.0 393.6L492.0 392.0L493.0 390.5L494.0 389.0L495.0 387.6L496.0 386.4L497.0 385.2L498.0 384.3L499.0 383.4L500.0 382.7L501.0 382.2L502.0 381.9L503.0 381.7L504.0 381.7L505.0 381.9L506.0 382.3L507.0 382.9L508.0 383.6L509.0 384.4L510.0 385.5L511.0 386.6L512.0 387.9L513.0 389.3L514.0 390.8L515.0 392.3L516.0 393.9L517.0 395.6L518.0 397.2L519.0 398.9L520.0 400.5L521.0 402.1L522.0 403.6L523.0 405.1L524.0 406.4L525.0 407.7L526.0 408.8L527.0 409.8L528.0 410.6L529.0 411.3L530.0 411.8L531.0 412.1L532.0 412.3L533.0 412.3L534.0 412.1L535.0 411.7L536.0 411.1L537.0 410.4L538.0 409.5L539.0 408.5L540.0 407.3L541.0 406.0L542.0 404.6L543.0 403.1L544.0 401.6L545.0 400.0L546.0 398.3L547.0 396.7L548.0 395.0L549.0 393.4L550.0 391.8L551.0 390.3L552.0 388.8L553.0 387.5L554.0 386.2L555.0 385.1L556.0 384.1L557.0 383.3L558.0 382.7L559.0 382.2L560.0 381.8L561.0 381.7L562.0 381.7L563.0 382.0L564.0 382.4L565.0 382.9L566.0 383.7L567.0 384.6L568.0 385.6L569.0 386.8L570.0 388.1L571.0 389.5L572.0 390.9L573.0 392.5L574.0 394.1L575.0 395.8L576.0 397.4L577.0 399.1L578.0 400.7L579.0 402.3L580.0 403.8L581.0 405.3L582.0 406.6L583.0 407.8L584.0 408.9L585.0 409.9L586.0 410.7L587.0 411.4L588.0 411.9L589.0 412.2L590.0 412.3L591.0 412.2L592.0 412.0L593.0 411.6L594.0 411.0L595.0 410.3L596.0 409.4L597.0 408.3L598.0 407.2L599.0 405.9L600.0 404.5L601.0 403.0L602.0 401.4L603.0 399.8L604.0 398.1L605.0 396.5L606.0 394.8L607.0 393.2L608.0 391.6L609.0 390.1L610.0 388.7L611.0 387.3L612.0 386.1L613.0 385.0L614.0 384.0L615.0 383.2L616.0 382.6L617.0 382.1L618.0 381.8L619.0 381.7L620.0 381.8L621.0 382.0L622.0 382.4L623.0 383.0L624.0 383.8L625.0 384.7L626.0 385.7L627.0 386.9L628.0 388.2L629.0 389.6L630.0 391.1L631.0 392.7L632.0 394.3L633.0 396.0L634.0 397.6L635.0 399.3L636.0 400.9L637.0 402.5L638.0 404.0L639.0 405.4L640.0 406.8L641.0 408.0L642.0 409.1L643.0 410.0L644.0 410.8L645.0 411.4L646.0 411.9L647.0 412.2L648.0 412.3L649.0 412.2L650.0 412.0L651.0 411.5L652.0 410.9L653.0 410.2L654.0 409.3L655.0 408.2L656.0 407.0L657.0 405.7L658.0 404.3L659.0 402.8L660.0 401.2L661.0 399.6L662.0 397.9L663.0 396.3L664.0 394.6L665.0 393.0L666.0 391.4L667.0 389.9L668.0 388.5L669.0 387.2L670.0 386.0L671.0 384.9L672.0 383.9L673.0 383.1L674.0 382.5L675.0 382.1L676.0 381.8L677.0 381.7L678.0 381.8L679.0 382.0L680.0 382.5L681.0 383.1L682.0 383.9L683.0 384.8L684.0 385.9L685.0 387.1L686.0 388.4L687.0 389.8L688.0 391.3L689.0 392.9L690.0 394.5L691.0 396.2L692.0 397.8L693.0 399.5L694.0 401.1L695.0 402.7L696.0 404.2L697.0 405.6L698.0 406.9L699.0 408.1L700.0 409.2L701.0 410.1L702.0 410.9L703.0 411.5L704.0 411.9L705.0 412.2L706.0 412.3L707.0 412.2L708.0 411.9L709.0 411.5L710.0 410.9L711.0 410.1L712.0 409.1L713.0 408.1L714.0 406.9L715.0 405.5L716.0 404.1L717.0 402.6L718.0 401.0L719.0 399.4L720.0 397.7L721.0 396.1L722.0 394.4L723.0 392.8L724.0 391.2L725.0 389.7L726.0 388.3L727.0 387.0L728.0 385.8L729.0 384.8L730.0 383.8L731.0 383.1L732.0 382.5L733.0 382.0L734.0 381.8L735.0 381.7L736.0 381.8L737.0 382.1L738.0 382.5L739.0 383.2L740.0 384.0L741.0 384.9L742.0 386.0L743.0 387.2L744.0 388.5L745.0 390.0L746.0 391.5L747.0 393.1L748.0 394.7L749.0 396.4L750.0 398.0L751.0 399.7L752.0 401.3L753.0 402.8L754.0 404.3L755.0 405.8L756.0 407.1L757.0 408.3L758.0 409.3L759.0 410.2L760.0 411.0L761.0 411.6L762.0 412.0L763.0 412.2L764.0 412.3" fill="none" stroke="#dcdcdc" stroke-width="1.3" stroke-linejoin="round"/></svg>
<div class="t c" style="left:139.7px;top:159.6px;width:46px;height:10px;line-height:10px;color:#d4970c;font-size:8px;letter-spacing:-0.1px">Uw1</div>
<div class="t" style="left:771.5px;top:146.8px;height:10px;line-height:10px;color:#b0b0b0;font-size:6.6px;letter-spacing:-0.1px">250V</div>
<div class="t" style="left:771.5px;top:159.0px;height:10px;line-height:10px;color:#b0b0b0;font-size:6.6px;letter-spacing:-0.1px">0V</div>
<div class="t" style="left:771.5px;top:171.2px;height:10px;line-height:10px;color:#b0b0b0;font-size:6.6px;letter-spacing:-0.1px">-250V</div>
<div class="t c" style="left:139.7px;top:207.0px;width:46px;height:10px;line-height:10px;color:#10c010;font-size:8px;letter-spacing:-0.1px">Iw1</div>
<div class="t" style="left:771.5px;top:195.5px;height:10px;line-height:10px;color:#b0b0b0;font-size:6.6px;letter-spacing:-0.1px">20A</div>
<div class="t" style="left:771.5px;top:205.8px;height:10px;line-height:10px;color:#b0b0b0;font-size:6.6px;letter-spacing:-0.1px">0A</div>
<div class="t" style="left:771.5px;top:216.1px;height:10px;line-height:10px;color:#b0b0b0;font-size:6.6px;letter-spacing:-0.1px">-20A</div>
<div class="t c" style="left:139.7px;top:253.3px;width:46px;height:10px;line-height:10px;color:#d2692c;font-size:8px;letter-spacing:-0.1px">Uw2</div>
<div class="t" style="left:771.5px;top:240.5px;height:10px;line-height:10px;color:#b0b0b0;font-size:6.6px;letter-spacing:-0.1px">250V</div>
<div class="t" style="left:771.5px;top:252.7px;height:10px;line-height:10px;color:#b0b0b0;font-size:6.6px;letter-spacing:-0.1px">0V</div>
<div class="t" style="left:771.5px;top:264.9px;height:10px;line-height:10px;color:#b0b0b0;font-size:6.6px;letter-spacing:-0.1px">-250V</div>
<div class="t c" style="left:139.7px;top:300.9px;width:46px;height:10px;line-height:10px;color:#8cbb0c;font-size:8px;letter-spacing:-0.1px">Iw2</div>
<div class="t" style="left:771.5px;top:289.4px;height:10px;line-height:10px;color:#b0b0b0;font-size:6.6px;letter-spacing:-0.1px">20A</div>
<div class="t" style="left:771.5px;top:299.7px;height:10px;line-height:10px;color:#b0b0b0;font-size:6.6px;letter-spacing:-0.1px">0A</div>
<div class="t" style="left:771.5px;top:310.0px;height:10px;line-height:10px;color:#b0b0b0;font-size:6.6px;letter-spacing:-0.1px">-20A</div>
<div class="t c" style="left:139.7px;top:347.3px;width:46px;height:10px;line-height:10px;color:#14b8a8;font-size:8px;letter-spacing:-0.1px">Uw3</div>
<div class="t" style="left:771.5px;top:334.5px;height:10px;line-height:10px;color:#b0b0b0;font-size:6.6px;letter-spacing:-0.1px">250V</div>
<div class="t" style="left:771.5px;top:346.7px;height:10px;line-height:10px;color:#b0b0b0;font-size:6.6px;letter-spacing:-0.1px">0V</div>
<div class="t" style="left:771.5px;top:358.9px;height:10px;line-height:10px;color:#b0b0b0;font-size:6.6px;letter-spacing:-0.1px">-250V</div>
<div class="t c" style="left:139.7px;top:394.2px;width:46px;height:10px;line-height:10px;color:#dcdcdc;font-size:8px;letter-spacing:-0.1px">Iw3</div>
<div class="t" style="left:771.5px;top:382.7px;height:10px;line-height:10px;color:#b0b0b0;font-size:6.6px;letter-spacing:-0.1px">20A</div>
<div class="t" style="left:771.5px;top:393.0px;height:10px;line-height:10px;color:#b0b0b0;font-size:6.6px;letter-spacing:-0.1px">0A</div>
<div class="t" style="left:771.5px;top:403.3px;height:10px;line-height:10px;color:#b0b0b0;font-size:6.6px;letter-spacing:-0.1px">-20A</div>
<div class="t c" style="left:177.7px;top:126.8px;width:40px;height:10px;line-height:10px;color:#b4b4b4;font-size:6.8px;letter-spacing:-0.1px">2.52s</div>
<div class="t c" style="left:235.6px;top:126.8px;width:40px;height:10px;line-height:10px;color:#b4b4b4;font-size:6.8px;letter-spacing:-0.1px">2.54s</div>
<div class="t c" style="left:293.5px;top:126.8px;width:40px;height:10px;line-height:10px;color:#b4b4b4;font-size:6.8px;letter-spacing:-0.1px">2.56s</div>
<div class="t c" style="left:698.6px;top:126.8px;width:40px;height:10px;line-height:10px;color:#b4b4b4;font-size:6.8px;letter-spacing:-0.1px">2.7s</div>
<div class="a" style="left:134.0px;top:428.0px;width:672.2px;height:17.7px;background:#4c4c4c"></div>
<div class="t" style="left:139.5px;top:432.8px;height:10px;line-height:10px;color:#f4f4f4;font-size:7.6px">数值视图</div>
<svg style="left:788.5px;top:432px" width="12" height="9" viewBox="0 0 12 9"><path d="M0.6 4.5C2.5 1.2 4.5 0.7 6 0.7S9.5 1.2 11.4 4.5C9.5 7.8 7.5 8.3 6 8.3S2.5 7.8 0.6 4.5Z" fill="none" stroke="#fff" stroke-width="1.1"/><circle cx="6" cy="4.5" r="2" fill="#fff"/><path d="M1.500 8.600L10.800 0.200" stroke="#ddd" stroke-width="0.500"/></svg>
<div class="a" style="left:139.4px;top:451.0px;width:47.5px;height:14.8px;background:linear-gradient(#86b420,#6f9a18);border-radius:1.5px 0 0 1.5px"></div>
<div class="t c" style="left:140.2px;top:454.3px;width:46px;height:10px;line-height:10px;color:#fff;font-size:7.5px">常规数据</div>
<div class="a" style="left:187.9px;top:451.0px;width:47.5px;height:14.8px;background:#5a5a5a"></div>
<div class="t c" style="left:188.6px;top:454.3px;width:46px;height:10px;line-height:10px;color:#c4c4c4;font-size:7.5px">积分数据</div>
<div class="a" style="left:236.3px;top:451.0px;width:47.5px;height:14.8px;background:#5a5a5a"></div>
<div class="t c" style="left:237.1px;top:454.3px;width:46px;height:10px;line-height:10px;color:#c4c4c4;font-size:7.5px">谐波指标</div>
<div class="a" style="left:284.8px;top:451.0px;width:47.5px;height:14.8px;background:#5a5a5a"></div>
<div class="t c" style="left:285.5px;top:454.3px;width:46px;height:10px;line-height:10px;color:#c4c4c4;font-size:7.5px">谐波列表</div>
<div class="a" style="left:139.4px;top:478.5px;width:661.6px;height:115.1px;background:#000"></div>
<div class="a" style="left:139.4px;top:593.6px;width:661.6px;height:5.8px;background:#242424"></div>
<div class="a" style="left:139.4px;top:478.5px;width:661.6px;height:13.9px;background:#0b0b0b"></div>
<div class="a" style="left:139.4px;top:492.4px;width:661.6px;height:14.3px;background:#1f1f1f"></div>
<div class="a" style="left:139.4px;top:506.7px;width:661.6px;height:14.3px;background:#121212"></div>
<div class="a" style="left:139.4px;top:521.0px;width:661.6px;height:14.2px;background:#1f1f1f"></div>
<div class="a" style="left:139.4px;top:535.2px;width:661.6px;height:14.1px;background:#121212"></div>
<div class="a" style="left:197.9px;top:478.3px;width:0.8px;height:71.2px;background:#181818"></div>
<div class="a" style="left:257.3px;top:478.3px;width:0.8px;height:71.2px;background:#181818"></div>
<div class="a" style="left:316.7px;top:478.3px;width:0.8px;height:71.2px;background:#181818"></div>
<div class="a" style="left:376.1px;top:478.3px;width:0.8px;height:71.2px;background:#181818"></div>
<div class="a" style="left:435.5px;top:478.3px;width:0.8px;height:71.2px;background:#181818"></div>
<div class="a" style="left:494.9px;top:478.3px;width:0.8px;height:71.2px;background:#181818"></div>
<div class="a" style="left:554.3px;top:478.3px;width:0.8px;height:71.2px;background:#181818"></div>
<div class="a" style="left:613.7px;top:478.3px;width:0.8px;height:71.2px;background:#181818"></div>
<div class="a" style="left:673.1px;top:478.3px;width:0.8px;height:71.2px;background:#181818"></div>
<div class="a" style="left:732.5px;top:478.3px;width:0.8px;height:71.2px;background:#181818"></div>
<div class="a" style="left:791.9px;top:478.3px;width:0.8px;height:71.2px;background:#181818"></div>
<div class="t" style="left:155.0px;top:481.4px;height:10px;line-height:10px;color:#e8e8e8;font-size:7.5px">功率数据</div>
<div class="t" style="left:202.6px;top:481.4px;height:10px;line-height:10px;color:#e0e0e0;font-size:7.9px;letter-spacing:-0.02px">U[V]</div>
<div class="t" style="left:262.0px;top:481.4px;height:10px;line-height:10px;color:#e0e0e0;font-size:7.9px;letter-spacing:-0.02px">I[A]</div>
<div class="t" style="left:321.4px;top:481.4px;height:10px;line-height:10px;color:#e0e0e0;font-size:7.9px;letter-spacing:-0.02px">P[W]</div>
<div class="t" style="left:380.8px;top:481.4px;height:10px;line-height:10px;color:#e0e0e0;font-size:7.9px;letter-spacing:-0.02px">UFreq[Hz]</div>
<div class="t" style="left:440.2px;top:481.4px;height:10px;line-height:10px;color:#e0e0e0;font-size:7.9px;letter-spacing:-0.02px">IFreq[Hz]</div>
<div class="t" style="left:499.6px;top:481.4px;height:10px;line-height:10px;color:#e0e0e0;font-size:7.9px;letter-spacing:-0.02px">λ</div>
<div class="t" style="left:559.0px;top:481.4px;height:10px;line-height:10px;color:#e0e0e0;font-size:7.9px;letter-spacing:-0.02px">φ[°]</div>
<div class="t" style="left:618.4px;top:481.4px;height:10px;line-height:10px;color:#e0e0e0;font-size:7.9px;letter-spacing:-0.02px">Math</div>
<div class="t" style="left:677.8px;top:481.4px;height:10px;line-height:10px;color:#e0e0e0;font-size:7.9px;letter-spacing:-0.02px">Uthd[%]</div>
<div class="t" style="left:737.2px;top:481.4px;height:10px;line-height:10px;color:#e0e0e0;font-size:7.9px;letter-spacing:-0.02px">Ithd[%]</div>
<div class="t" style="left:155.0px;top:495.7px;height:10px;line-height:10px;color:#e8e8e8;font-size:7.5px">功率卡1</div>
<div class="t" style="left:202.6px;top:495.7px;height:10px;line-height:10px;color:#f0f0f0;font-size:7.9px;letter-spacing:-0.23px">218.887665</div>
<div class="t" style="left:262.0px;top:495.7px;height:10px;line-height:10px;color:#f0f0f0;font-size:7.9px;letter-spacing:-0.23px">2.044866</div>
<div class="t" style="left:321.4px;top:495.7px;height:10px;line-height:10px;color:#f0f0f0;font-size:7.9px;letter-spacing:-0.23px">-447.397156</div>
<div class="t" style="left:380.8px;top:495.7px;height:10px;line-height:10px;color:#f0f0f0;font-size:7.9px;letter-spacing:-0.23px">50.002308</div>
<div class="t" style="left:440.2px;top:495.7px;height:10px;line-height:10px;color:#f0f0f0;font-size:7.9px;letter-spacing:-0.23px">49.964783</div>
<div class="t" style="left:499.6px;top:495.7px;height:10px;line-height:10px;color:#f0f0f0;font-size:7.9px;letter-spacing:-0.23px">-0.999556</div>
<div class="t" style="left:559.0px;top:495.7px;height:10px;line-height:10px;color:#f0f0f0;font-size:7.9px;letter-spacing:-0.23px">178.290512</div>
<div class="t" style="left:618.4px;top:495.7px;height:10px;line-height:10px;color:#f0f0f0;font-size:7.9px;letter-spacing:-0.23px">0</div>
<div class="t" style="left:677.8px;top:495.7px;height:10px;line-height:10px;color:#f0f0f0;font-size:7.9px;letter-spacing:-0.23px">0</div>
<div class="t" style="left:737.2px;top:495.7px;height:10px;line-height:10px;color:#f0f0f0;font-size:7.9px;letter-spacing:-0.23px">0</div>
<div class="t" style="left:155.0px;top:510.0px;height:10px;line-height:10px;color:#e8e8e8;font-size:7.5px">功率卡2</div>
<div class="t" style="left:202.6px;top:510.0px;height:10px;line-height:10px;color:#f0f0f0;font-size:7.9px;letter-spacing:-0.23px">220.760376</div>
<div class="t" style="left:262.0px;top:510.0px;height:10px;line-height:10px;color:#f0f0f0;font-size:7.9px;letter-spacing:-0.23px">2.045452</div>
<div class="t" style="left:321.4px;top:510.0px;height:10px;line-height:10px;color:#f0f0f0;font-size:7.9px;letter-spacing:-0.23px">-451.304596</div>
<div class="t" style="left:380.8px;top:510.0px;height:10px;line-height:10px;color:#f0f0f0;font-size:7.9px;letter-spacing:-0.23px">50.007656</div>
<div class="t" style="left:440.2px;top:510.0px;height:10px;line-height:10px;color:#f0f0f0;font-size:7.9px;letter-spacing:-0.23px">49.901451</div>
<div class="t" style="left:499.6px;top:510.0px;height:10px;line-height:10px;color:#f0f0f0;font-size:7.9px;letter-spacing:-0.23px">-0.999446</div>
<div class="t" style="left:559.0px;top:510.0px;height:10px;line-height:10px;color:#f0f0f0;font-size:7.9px;letter-spacing:-0.23px">178.091507</div>
<div class="t" style="left:618.4px;top:510.0px;height:10px;line-height:10px;color:#f0f0f0;font-size:7.9px;letter-spacing:-0.23px">0</div>
<div class="t" style="left:677.8px;top:510.0px;height:10px;line-height:10px;color:#f0f0f0;font-size:7.9px;letter-spacing:-0.23px">0</div>
<div class="t" style="left:737.2px;top:510.0px;height:10px;line-height:10px;color:#f0f0f0;font-size:7.9px;letter-spacing:-0.23px">0</div>
<div class="t" style="left:155.0px;top:524.2px;height:10px;line-height:10px;color:#e8e8e8;font-size:7.5px">功率卡3</div>
<div class="t" style="left:202.6px;top:524.2px;height:10px;line-height:10px;color:#f0f0f0;font-size:7.9px;letter-spacing:-0.23px">220.094269</div>
<div class="t" style="left:262.0px;top:524.2px;height:10px;line-height:10px;color:#f0f0f0;font-size:7.9px;letter-spacing:-0.23px">2.045495</div>
<div class="t" style="left:321.4px;top:524.2px;height:10px;line-height:10px;color:#f0f0f0;font-size:7.9px;letter-spacing:-0.23px">-449.858673</div>
<div class="t" style="left:380.8px;top:524.2px;height:10px;line-height:10px;color:#f0f0f0;font-size:7.9px;letter-spacing:-0.23px">50.008057</div>
<div class="t" style="left:440.2px;top:524.2px;height:10px;line-height:10px;color:#f0f0f0;font-size:7.9px;letter-spacing:-0.23px">50.018913</div>
<div class="t" style="left:499.6px;top:524.2px;height:10px;line-height:10px;color:#f0f0f0;font-size:7.9px;letter-spacing:-0.23px">-0.999238</div>
<div class="t" style="left:559.0px;top:524.2px;height:10px;line-height:10px;color:#f0f0f0;font-size:7.9px;letter-spacing:-0.23px">177.762085</div>
<div class="t" style="left:618.4px;top:524.2px;height:10px;line-height:10px;color:#f0f0f0;font-size:7.9px;letter-spacing:-0.23px">0</div>
<div class="t" style="left:677.8px;top:524.2px;height:10px;line-height:10px;color:#f0f0f0;font-size:7.9px;letter-spacing:-0.23px">0</div>
<div class="t" style="left:737.2px;top:524.2px;height:10px;line-height:10px;color:#f0f0f0;font-size:7.9px;letter-spacing:-0.23px">0</div>
<div class="t" style="left:155.0px;top:538.5px;height:10px;line-height:10px;color:#e8e8e8;font-size:7.5px">接线组A</div>
<div class="t" style="left:202.6px;top:538.5px;height:10px;line-height:10px;color:#f0f0f0;font-size:7.9px;letter-spacing:-0.23px">219.490967</div>
<div class="t" style="left:262.0px;top:538.5px;height:10px;line-height:10px;color:#f0f0f0;font-size:7.9px;letter-spacing:-0.23px">2.045180</div>
<div class="t" style="left:321.4px;top:538.5px;height:10px;line-height:10px;color:#f0f0f0;font-size:7.9px;letter-spacing:-0.23px">-897.255798</div>
<div class="t" style="left:380.8px;top:538.5px;height:10px;line-height:10px;color:#a8a8a8;font-size:7.9px;letter-spacing:0;font-weight:bold">------</div>
<div class="t" style="left:440.2px;top:538.5px;height:10px;line-height:10px;color:#a8a8a8;font-size:7.9px;letter-spacing:0;font-weight:bold">------</div>
<div class="t" style="left:499.6px;top:538.5px;height:10px;line-height:10px;color:#f0f0f0;font-size:7.9px;letter-spacing:-0.23px">-0.999397</div>
<div class="t" style="left:559.0px;top:538.5px;height:10px;line-height:10px;color:#f0f0f0;font-size:7.9px;letter-spacing:-0.23px">178.009399</div>
<div class="t" style="left:618.4px;top:538.5px;height:10px;line-height:10px;color:#f0f0f0;font-size:7.9px;letter-spacing:-0.23px">0</div>
<div class="t" style="left:677.8px;top:538.5px;height:10px;line-height:10px;color:#a8a8a8;font-size:7.9px;letter-spacing:0;font-weight:bold">------</div>
<div class="t" style="left:737.2px;top:538.5px;height:10px;line-height:10px;color:#a8a8a8;font-size:7.9px;letter-spacing:0;font-weight:bold">------</div>
<svg style="left:139px;top:593px" width="663" height="7" viewBox="0 0 663 7"><path d="M3.400 3.300L5.200 2.100V4.500Z M659.300 3.300L657.500 2.100V4.500Z" fill="#e8e8e8"/><rect x="8.200" y="1.400" width="582" height="3.800" rx="1.900" fill="#a2a2a2"/></svg>
<div class="a" style="left:807.8px;top:79.0px;width:192.2px;height:18.5px;background:#474747"></div>
<div class="t" style="left:814.4px;top:84.6px;height:10px;line-height:10px;color:#f0f0f0;font-size:7.7px">数据</div>
<svg style="left:985.5px;top:85.5px" width="7" height="7" viewBox="0 0 7 7"><path d="M0.7 0.7L3 3.5L0.7 6.3M3.8 0.7L6.1 3.5L3.8 6.3" fill="none" stroke="#fff" stroke-width="1.3"/></svg>
<div class="a" style="left:807.8px;top:97.5px;width:192.2px;height:1.0px;background:#2c2c2c"></div>
<div class="a" style="left:807.8px;top:98.5px;width:192.2px;height:506.5px;background:#3a3a3a"></div>
<div class="a" style="left:807.8px;top:98.5px;width:18.2px;height:506.5px;background:#2a2a2a"></div>
<div class="a" style="left:808.5px;top:124.5px;width:17.5px;height:20.0px;background:#3e3e3e"></div>
<svg style="left:812px;top:108.5px" width="13" height="12" viewBox="0 0 13 12"><path d="M5 0.8L9.2 3.1V8.3L5 10.8L0.8 8.3V3.1Z" fill="none" stroke="#eee" stroke-width="1.1"/><path d="M0.8 3.1L5 5.6L9.2 3.1M5 5.6V10.8" fill="none" stroke="#eee" stroke-width="1"/><path d="M11.6 3.6V4.6M11.6 5.6V6.6M11.6 7.6V8.6" stroke="#ccc" stroke-width="0.9"/></svg>
<svg style="left:812.5px;top:129.5px" width="11" height="10" viewBox="0 0 11 10"><path d="M3 1.2H11M3 5H11M3 8.8H11" stroke="#fff" stroke-width="1.4"/><path d="M0 1.2H1.6M0 5H1.6M0 8.8H1.6" stroke="#fff" stroke-width="1.4"/></svg>
<div class="a" style="left:833.0px;top:104.6px;width:159.5px;height:13.7px;background:#292929;border-radius:1.5px"></div>
<div class="t" style="left:839.0px;top:107.2px;height:10px;line-height:10px;color:#3d3d3d;font-size:7.4px">请输入需要查找的数据...</div>
<div class="a" style="left:833.0px;top:125.4px;width:162.0px;height:473.1px;background:#1a1a1a"></div>
<div class="a" style="left:833.0px;top:125.6px;width:154.8px;height:15.4px;background:#343434;border:1px solid #2a2a2a"></div>
<div class="t c" style="left:880.4px;top:128.8px;width:60px;height:10px;line-height:10px;color:#9a9a9a;font-size:7.5px">数据源</div>
<div class="a" style="left:987.8px;top:125.4px;width:7.2px;height:473.1px;background:#333"></div>
<svg style="left:988.4px;top:126px" width="6" height="474" viewBox="0 0 6 474"><path d="M3 1.600L4.400 3.600H1.600Z M3 470.400L4.500 468.400H1.500Z" fill="#eee"/><rect x="1.6" y="6.5" width="3" height="9" rx="1.5" fill="#aaa"/></svg>
<div class="a" style="left:833.0px;top:141.0px;width:154.8px;height:14.3px;background:#0d0d0d"></div>
<svg style="left:838.0px;top:146.4px" width="5" height="4" viewBox="0 0 5 4"><path d="M0.3 0.6H4.7L2.5 3.4Z" fill="#eee"/></svg>
<div class="t" style="left:847.8px;top:144.6px;height:10px;line-height:10px;color:#eee;font-size:7.5px">功率卡1</div>
<div class="a" style="left:833.0px;top:155.3px;width:154.8px;height:14.3px;background:#1c1c1c"></div>
<svg style="left:850.0px;top:160.8px" width="5" height="4" viewBox="0 0 5 4"><path d="M0.3 0.6H4.7L2.5 3.4Z" fill="#eee"/></svg>
<div class="t" style="left:859.8px;top:158.9px;height:10px;line-height:10px;color:#eee;font-size:7.5px">波形数据</div>
<div class="a" style="left:833.0px;top:169.6px;width:154.8px;height:14.3px;background:#0d0d0d"></div>
<div class="t" style="left:871.8px;top:173.2px;height:10px;line-height:10px;color:#d4970c;font-size:7.9px;letter-spacing:-0.05px">Uw1</div>
<svg style="left:970px;top:172.0px" width="11" height="10" viewBox="0 0 11 10" fill="none"><path d="M0.5 3.6L2.2 0.8L3.9 3.6L5.6 0.8L7.3 3.6L9 0.8L10.5 3.6" stroke="#28a8e0" stroke-width="1.300"/><path d="M0.5 4.8H10.5" stroke="#888" stroke-width="0.7"/><path d="M0.5 8.8L2.2 6.2L3.9 8.8L5.6 6.2L7.3 8.8L9 6.2L10.5 8.8" stroke="#e04828" stroke-width="1.100"/></svg>
<div class="a" style="left:833.0px;top:183.9px;width:154.8px;height:14.3px;background:#1c1c1c"></div>
<div class="t" style="left:871.8px;top:187.5px;height:10px;line-height:10px;color:#10c010;font-size:7.9px;letter-spacing:-0.05px">Iw1</div>
<svg style="left:970px;top:186.3px" width="11" height="10" viewBox="0 0 11 10" fill="none"><path d="M0.5 3.6L2.2 0.8L3.9 3.6L5.6 0.8L7.3 3.6L9 0.8L10.5 3.6" stroke="#28a8e0" stroke-width="1.300"/><path d="M0.5 4.8H10.5" stroke="#888" stroke-width="0.7"/><path d="M0.5 8.8L2.2 6.2L3.9 8.8L5.6 6.2L7.3 8.8L9 6.2L10.5 8.8" stroke="#e04828" stroke-width="1.100"/></svg>
<div class="a" style="left:833.0px;top:198.2px;width:154.8px;height:14.3px;background:#0d0d0d"></div>
<svg style="left:850.0px;top:203.6px" width="5" height="4" viewBox="0 0 5 4"><path d="M0.3 0.6H4.7L2.5 3.4Z" fill="#eee"/></svg>
<div class="t" style="left:859.8px;top:201.8px;height:10px;line-height:10px;color:#eee;font-size:7.5px">常规数据</div>
<div class="a" style="left:833.0px;top:212.5px;width:154.8px;height:14.3px;background:#1c1c1c"></div>
<div class="t" style="left:871.8px;top:216.1px;height:10px;line-height:10px;color:#2f86d6;font-size:7.9px;letter-spacing:-0.05px">U1</div>
<svg style="left:969.9px;top:215.7px" width="11.300" height="8.800" viewBox="0 0 10 8" preserveAspectRatio="none"><rect x="0.600" y="0.600" width="8.800" height="6.800" rx="0.800" fill="#2c2c2c" stroke="#4eb214" stroke-width="1.200"/><path d="M2.4 5.6V2.6M3.6 2.6H4.8V4H3.6V5.6H5M6 5.6V2.4L7.6 5.6V2.4" stroke="#d8d8d8" stroke-width="0.6" fill="none"/></svg>
<div class="a" style="left:833.0px;top:226.8px;width:154.8px;height:14.3px;background:#0d0d0d"></div>
<div class="t" style="left:871.8px;top:230.4px;height:10px;line-height:10px;color:#d247b0;font-size:7.9px;letter-spacing:-0.05px">I1</div>
<svg style="left:969.9px;top:230.0px" width="11.300" height="8.800" viewBox="0 0 10 8" preserveAspectRatio="none"><rect x="0.600" y="0.600" width="8.800" height="6.800" rx="0.800" fill="#2c2c2c" stroke="#4eb214" stroke-width="1.200"/><path d="M2.4 5.6V2.6M3.6 2.6H4.8V4H3.6V5.6H5M6 5.6V2.4L7.6 5.6V2.4" stroke="#d8d8d8" stroke-width="0.6" fill="none"/></svg>
<div class="a" style="left:833.0px;top:241.1px;width:154.8px;height:14.3px;background:#1c1c1c"></div>
<div class="t" style="left:871.8px;top:244.7px;height:10px;line-height:10px;color:#d8a028;font-size:7.9px;letter-spacing:-0.05px">P1</div>
<svg style="left:969.9px;top:244.3px" width="11.300" height="8.800" viewBox="0 0 10 8" preserveAspectRatio="none"><rect x="0.600" y="0.600" width="8.800" height="6.800" rx="0.800" fill="#2c2c2c" stroke="#4eb214" stroke-width="1.200"/><path d="M2.4 5.6V2.6M3.6 2.6H4.8V4H3.6V5.6H5M6 5.6V2.4L7.6 5.6V2.4" stroke="#d8d8d8" stroke-width="0.6" fill="none"/></svg>
<div class="a" style="left:833.0px;top:255.4px;width:154.8px;height:14.3px;background:#0d0d0d"></div>
<div class="t" style="left:871.8px;top:259.0px;height:10px;line-height:10px;color:#2fc24a;font-size:7.9px;letter-spacing:-0.05px">λ1</div>
<svg style="left:969.9px;top:258.6px" width="11.300" height="8.800" viewBox="0 0 10 8" preserveAspectRatio="none"><rect x="0.600" y="0.600" width="8.800" height="6.800" rx="0.800" fill="#2c2c2c" stroke="#4eb214" stroke-width="1.200"/><path d="M2.4 5.6V2.6M3.6 2.6H4.8V4H3.6V5.6H5M6 5.6V2.4L7.6 5.6V2.4" stroke="#d8d8d8" stroke-width="0.6" fill="none"/></svg>
<div class="a" style="left:833.0px;top:269.7px;width:154.8px;height:14.3px;background:#1c1c1c"></div>
<div class="t" style="left:871.8px;top:273.3px;height:10px;line-height:10px;color:#3a78d8;font-size:7.9px;letter-spacing:-0.05px">φ1</div>
<svg style="left:969.9px;top:272.9px" width="11.300" height="8.800" viewBox="0 0 10 8" preserveAspectRatio="none"><rect x="0.600" y="0.600" width="8.800" height="6.800" rx="0.800" fill="#2c2c2c" stroke="#4eb214" stroke-width="1.200"/><path d="M2.4 5.6V2.6M3.6 2.6H4.8V4H3.6V5.6H5M6 5.6V2.4L7.6 5.6V2.4" stroke="#d8d8d8" stroke-width="0.6" fill="none"/></svg>
<div class="a" style="left:833.0px;top:284.0px;width:154.8px;height:14.3px;background:#0d0d0d"></div>
<div class="t" style="left:871.8px;top:287.6px;height:10px;line-height:10px;color:#c84aa0;font-size:7.9px;letter-spacing:-0.05px">Ufreq1</div>
<svg style="left:969.9px;top:287.1px" width="11.300" height="8.800" viewBox="0 0 10 8" preserveAspectRatio="none"><rect x="0.600" y="0.600" width="8.800" height="6.800" rx="0.800" fill="#2c2c2c" stroke="#4eb214" stroke-width="1.200"/><path d="M2.4 5.6V2.6M3.6 2.6H4.8V4H3.6V5.6H5M6 5.6V2.4L7.6 5.6V2.4" stroke="#d8d8d8" stroke-width="0.6" fill="none"/></svg>
<div class="a" style="left:833.0px;top:298.3px;width:154.8px;height:14.3px;background:#1c1c1c"></div>
<div class="t" style="left:871.8px;top:301.9px;height:10px;line-height:10px;color:#dcb030;font-size:7.9px;letter-spacing:-0.05px">Ifreq1</div>
<svg style="left:969.9px;top:301.5px" width="11.300" height="8.800" viewBox="0 0 10 8" preserveAspectRatio="none"><rect x="0.600" y="0.600" width="8.800" height="6.800" rx="0.800" fill="#2c2c2c" stroke="#4eb214" stroke-width="1.200"/><path d="M2.4 5.6V2.6M3.6 2.6H4.8V4H3.6V5.6H5M6 5.6V2.4L7.6 5.6V2.4" stroke="#d8d8d8" stroke-width="0.6" fill="none"/></svg>
<div class="a" style="left:833.0px;top:312.6px;width:154.8px;height:14.3px;background:#0d0d0d"></div>
<div class="t" style="left:871.8px;top:316.2px;height:10px;line-height:10px;color:#18b070;font-size:7.9px;letter-spacing:-0.05px">MATH1</div>
<svg style="left:969.9px;top:315.8px" width="11.300" height="8.800" viewBox="0 0 10 8" preserveAspectRatio="none"><rect x="0.600" y="0.600" width="8.800" height="6.800" rx="0.800" fill="#2c2c2c" stroke="#4eb214" stroke-width="1.200"/><path d="M2.4 5.6V2.6M3.6 2.6H4.8V4H3.6V5.6H5M6 5.6V2.4L7.6 5.6V2.4" stroke="#d8d8d8" stroke-width="0.6" fill="none"/></svg>
<div class="a" style="left:833.0px;top:326.9px;width:154.8px;height:14.3px;background:#1c1c1c"></div>
<div class="t" style="left:871.8px;top:330.4px;height:10px;line-height:10px;color:#5a5ad8;font-size:7.9px;letter-spacing:-0.05px">TIME1</div>
<svg style="left:969.9px;top:330.0px" width="11.300" height="8.800" viewBox="0 0 10 8" preserveAspectRatio="none"><rect x="0.600" y="0.600" width="8.800" height="6.800" rx="0.800" fill="#2c2c2c" stroke="#4eb214" stroke-width="1.200"/><path d="M2.4 5.6V2.6M3.6 2.6H4.8V4H3.6V5.6H5M6 5.6V2.4L7.6 5.6V2.4" stroke="#d8d8d8" stroke-width="0.6" fill="none"/></svg>
<div class="a" style="left:833.0px;top:341.2px;width:154.8px;height:14.3px;background:#0d0d0d"></div>
<div class="t" style="left:871.8px;top:344.8px;height:10px;line-height:10px;color:#d8487c;font-size:7.9px;letter-spacing:-0.05px">WP1</div>
<svg style="left:969.9px;top:344.4px" width="11.300" height="8.800" viewBox="0 0 10 8" preserveAspectRatio="none"><rect x="0.600" y="0.600" width="8.800" height="6.800" rx="0.800" fill="#2c2c2c" stroke="#4eb214" stroke-width="1.200"/><path d="M2.4 5.6V2.6M3.6 2.6H4.8V4H3.6V5.6H5M6 5.6V2.4L7.6 5.6V2.4" stroke="#d8d8d8" stroke-width="0.6" fill="none"/></svg>
<div class="a" style="left:833.0px;top:355.5px;width:154.8px;height:14.3px;background:#1c1c1c"></div>
<div class="t" style="left:871.8px;top:359.1px;height:10px;line-height:10px;color:#d4c420;font-size:7.9px;letter-spacing:-0.05px">WP+1</div>
<svg style="left:969.9px;top:358.6px" width="11.300" height="8.800" viewBox="0 0 10 8" preserveAspectRatio="none"><rect x="0.600" y="0.600" width="8.800" height="6.800" rx="0.800" fill="#2c2c2c" stroke="#4eb214" stroke-width="1.200"/><path d="M2.4 5.6V2.6M3.6 2.6H4.8V4H3.6V5.6H5M6 5.6V2.4L7.6 5.6V2.4" stroke="#d8d8d8" stroke-width="0.6" fill="none"/></svg>
<div class="a" style="left:833.0px;top:369.8px;width:154.8px;height:14.3px;background:#0d0d0d"></div>
<div class="t" style="left:871.8px;top:373.4px;height:10px;line-height:10px;color:#18c0a0;font-size:7.9px;letter-spacing:-0.05px">WP-1</div>
<svg style="left:969.9px;top:373.0px" width="11.300" height="8.800" viewBox="0 0 10 8" preserveAspectRatio="none"><rect x="0.600" y="0.600" width="8.800" height="6.800" rx="0.800" fill="#2c2c2c" stroke="#4eb214" stroke-width="1.200"/><path d="M2.4 5.6V2.6M3.6 2.6H4.8V4H3.6V5.6H5M6 5.6V2.4L7.6 5.6V2.4" stroke="#d8d8d8" stroke-width="0.6" fill="none"/></svg>
<div class="a" style="left:833.0px;top:384.1px;width:154.8px;height:14.3px;background:#1c1c1c"></div>
<div class="t" style="left:871.8px;top:387.7px;height:10px;line-height:10px;color:#8a4ad8;font-size:7.9px;letter-spacing:-0.05px">q1</div>
<svg style="left:969.9px;top:387.2px" width="11.300" height="8.800" viewBox="0 0 10 8" preserveAspectRatio="none"><rect x="0.600" y="0.600" width="8.800" height="6.800" rx="0.800" fill="#2c2c2c" stroke="#4eb214" stroke-width="1.200"/><path d="M2.4 5.6V2.6M3.6 2.6H4.8V4H3.6V5.6H5M6 5.6V2.4L7.6 5.6V2.4" stroke="#d8d8d8" stroke-width="0.6" fill="none"/></svg>
<div class="a" style="left:833.0px;top:398.4px;width:154.8px;height:14.3px;background:#0d0d0d"></div>
<div class="t" style="left:871.8px;top:402.0px;height:10px;line-height:10px;color:#d84858;font-size:7.9px;letter-spacing:-0.05px">q+1</div>
<svg style="left:969.9px;top:401.6px" width="11.300" height="8.800" viewBox="0 0 10 8" preserveAspectRatio="none"><rect x="0.600" y="0.600" width="8.800" height="6.800" rx="0.800" fill="#2c2c2c" stroke="#4eb214" stroke-width="1.200"/><path d="M2.4 5.6V2.6M3.6 2.6H4.8V4H3.6V5.6H5M6 5.6V2.4L7.6 5.6V2.4" stroke="#d8d8d8" stroke-width="0.6" fill="none"/></svg>
<div class="a" style="left:833.0px;top:412.7px;width:154.8px;height:14.3px;background:#1c1c1c"></div>
<div class="t" style="left:871.8px;top:416.3px;height:10px;line-height:10px;color:#c8b818;font-size:7.9px;letter-spacing:-0.05px">q-1</div>
<svg style="left:969.9px;top:415.9px" width="11.300" height="8.800" viewBox="0 0 10 8" preserveAspectRatio="none"><rect x="0.600" y="0.600" width="8.800" height="6.800" rx="0.800" fill="#2c2c2c" stroke="#4eb214" stroke-width="1.200"/><path d="M2.4 5.6V2.6M3.6 2.6H4.8V4H3.6V5.6H5M6 5.6V2.4L7.6 5.6V2.4" stroke="#d8d8d8" stroke-width="0.6" fill="none"/></svg>
<div class="a" style="left:833.0px;top:427.0px;width:154.8px;height:14.3px;background:#0d0d0d"></div>
<div class="t" style="left:871.8px;top:430.6px;height:10px;line-height:10px;color:#18c0a8;font-size:7.9px;letter-spacing:-0.05px">Uthd1</div>
<svg style="left:969.9px;top:430.1px" width="11.300" height="8.800" viewBox="0 0 10 8" preserveAspectRatio="none"><rect x="0.600" y="0.600" width="8.800" height="6.800" rx="0.800" fill="#2c2c2c" stroke="#4eb214" stroke-width="1.200"/><path d="M2.4 5.6V2.6M3.6 2.6H4.8V4H3.6V5.6H5M6 5.6V2.4L7.6 5.6V2.4" stroke="#d8d8d8" stroke-width="0.6" fill="none"/></svg>
<div class="a" style="left:833.0px;top:441.3px;width:154.8px;height:14.3px;background:#1c1c1c"></div>
<div class="t" style="left:871.8px;top:444.9px;height:10px;line-height:10px;color:#e8e8e8;font-size:7.9px;letter-spacing:-0.05px">Ithd1</div>
<svg style="left:969.9px;top:444.5px" width="11.300" height="8.800" viewBox="0 0 10 8" preserveAspectRatio="none"><rect x="0.600" y="0.600" width="8.800" height="6.800" rx="0.800" fill="#2c2c2c" stroke="#4eb214" stroke-width="1.200"/><path d="M2.4 5.6V2.6M3.6 2.6H4.8V4H3.6V5.6H5M6 5.6V2.4L7.6 5.6V2.4" stroke="#d8d8d8" stroke-width="0.6" fill="none"/></svg>
<div class="a" style="left:833.0px;top:455.6px;width:154.8px;height:14.3px;background:#0d0d0d"></div>
<svg style="left:850.0px;top:461.1px" width="5" height="4" viewBox="0 0 5 4"><path d="M0.3 0.6H4.7L2.5 3.4Z" fill="#eee"/></svg>
<div class="t" style="left:859.8px;top:459.2px;height:10px;line-height:10px;color:#eee;font-size:7.5px">谐波数据</div>
<div class="a" style="left:833.0px;top:469.9px;width:154.8px;height:14.3px;background:#1c1c1c"></div>
<svg style="left:862.0px;top:475.4px" width="5" height="4" viewBox="0 0 5 4"><path d="M0.3 0.6H4.7L2.5 3.4Z" fill="#eee"/></svg>
<div class="t" style="left:871.8px;top:473.5px;height:10px;line-height:10px;color:#eee;font-size:7.5px">U1</div>
<div class="a" style="left:833.0px;top:484.2px;width:154.8px;height:14.3px;background:#0d0d0d"></div>
<div class="t" style="left:883.6px;top:487.8px;height:10px;line-height:10px;color:#c8b838;font-size:7.9px;letter-spacing:-0.05px">U1(1)</div>
<svg style="left:969.9px;top:487.4px" width="11.300" height="8.800" viewBox="0 0 10 8" preserveAspectRatio="none"><rect x="0.600" y="0.600" width="8.800" height="6.800" rx="0.800" fill="#2c2c2c" stroke="#4eb214" stroke-width="1.200"/><path d="M2.4 5.6V2.6M3.6 2.6H4.8V4H3.6V5.6H5M6 5.6V2.4L7.6 5.6V2.4" stroke="#d8d8d8" stroke-width="0.6" fill="none"/></svg>
<div class="a" style="left:833.0px;top:498.5px;width:154.8px;height:14.3px;background:#1c1c1c"></div>
<div class="t" style="left:883.6px;top:502.1px;height:10px;line-height:10px;color:#18b070;font-size:7.9px;letter-spacing:-0.05px">U1(2)</div>
<svg style="left:969.9px;top:501.6px" width="11.300" height="8.800" viewBox="0 0 10 8" preserveAspectRatio="none"><rect x="0.600" y="0.600" width="8.800" height="6.800" rx="0.800" fill="#2c2c2c" stroke="#4eb214" stroke-width="1.200"/><path d="M2.4 5.6V2.6M3.6 2.6H4.8V4H3.6V5.6H5M6 5.6V2.4L7.6 5.6V2.4" stroke="#d8d8d8" stroke-width="0.6" fill="none"/></svg>
<div class="a" style="left:833.0px;top:512.8px;width:154.8px;height:14.3px;background:#0d0d0d"></div>
<div class="t" style="left:883.6px;top:516.3px;height:10px;line-height:10px;color:#5048d8;font-size:7.9px;letter-spacing:-0.05px">U1(3)</div>
<svg style="left:969.9px;top:515.9px" width="11.300" height="8.800" viewBox="0 0 10 8" preserveAspectRatio="none"><rect x="0.600" y="0.600" width="8.800" height="6.800" rx="0.800" fill="#2c2c2c" stroke="#4eb214" stroke-width="1.200"/><path d="M2.4 5.6V2.6M3.6 2.6H4.8V4H3.6V5.6H5M6 5.6V2.4L7.6 5.6V2.4" stroke="#d8d8d8" stroke-width="0.6" fill="none"/></svg>
<div class="a" style="left:833.0px;top:527.1px;width:154.8px;height:14.3px;background:#1c1c1c"></div>
<div class="t" style="left:883.6px;top:530.6px;height:10px;line-height:10px;color:#c84868;font-size:7.9px;letter-spacing:-0.05px">U1(4)</div>
<svg style="left:969.9px;top:530.2px" width="11.300" height="8.800" viewBox="0 0 10 8" preserveAspectRatio="none"><rect x="0.600" y="0.600" width="8.800" height="6.800" rx="0.800" fill="#2c2c2c" stroke="#4eb214" stroke-width="1.200"/><path d="M2.4 5.6V2.6M3.6 2.6H4.8V4H3.6V5.6H5M6 5.6V2.4L7.6 5.6V2.4" stroke="#d8d8d8" stroke-width="0.6" fill="none"/></svg>
<div class="a" style="left:833.0px;top:541.4px;width:154.8px;height:14.3px;background:#0d0d0d"></div>
<div class="t" style="left:883.6px;top:545.0px;height:10px;line-height:10px;color:#c0b020;font-size:7.9px;letter-spacing:-0.05px">U1(5)</div>
<svg style="left:969.9px;top:544.6px" width="11.300" height="8.800" viewBox="0 0 10 8" preserveAspectRatio="none"><rect x="0.600" y="0.600" width="8.800" height="6.800" rx="0.800" fill="#2c2c2c" stroke="#4eb214" stroke-width="1.200"/><path d="M2.4 5.6V2.6M3.6 2.6H4.8V4H3.6V5.6H5M6 5.6V2.4L7.6 5.6V2.4" stroke="#d8d8d8" stroke-width="0.6" fill="none"/></svg>
<div class="a" style="left:833.0px;top:555.7px;width:154.8px;height:14.3px;background:#1c1c1c"></div>
<div class="t" style="left:883.6px;top:559.2px;height:10px;line-height:10px;color:#18a888;font-size:7.9px;letter-spacing:-0.05px">U1(6)</div>
<svg style="left:969.9px;top:558.9px" width="11.300" height="8.800" viewBox="0 0 10 8" preserveAspectRatio="none"><rect x="0.600" y="0.600" width="8.800" height="6.800" rx="0.800" fill="#2c2c2c" stroke="#4eb214" stroke-width="1.200"/><path d="M2.4 5.6V2.6M3.6 2.6H4.8V4H3.6V5.6H5M6 5.6V2.4L7.6 5.6V2.4" stroke="#d8d8d8" stroke-width="0.6" fill="none"/></svg>
<div class="a" style="left:833.0px;top:570.0px;width:154.8px;height:14.3px;background:#0d0d0d"></div>
<div class="t" style="left:883.6px;top:573.5px;height:10px;line-height:10px;color:#7840d8;font-size:7.9px;letter-spacing:-0.05px">U1(7)</div>
<svg style="left:969.9px;top:573.1px" width="11.300" height="8.800" viewBox="0 0 10 8" preserveAspectRatio="none"><rect x="0.600" y="0.600" width="8.800" height="6.800" rx="0.800" fill="#2c2c2c" stroke="#4eb214" stroke-width="1.200"/><path d="M2.4 5.6V2.6M3.6 2.6H4.8V4H3.6V5.6H5M6 5.6V2.4L7.6 5.6V2.4" stroke="#d8d8d8" stroke-width="0.6" fill="none"/></svg>
<div class="a" style="left:833.0px;top:584.3px;width:154.8px;height:14.3px;background:#1c1c1c"></div>
<div class="t" style="left:883.6px;top:587.8px;height:10px;line-height:10px;color:#c84058;font-size:7.9px;letter-spacing:-0.05px">U1(8)</div>
<svg style="left:969.9px;top:587.4px" width="11.300" height="8.800" viewBox="0 0 10 8" preserveAspectRatio="none"><rect x="0.600" y="0.600" width="8.800" height="6.800" rx="0.800" fill="#2c2c2c" stroke="#4eb214" stroke-width="1.200"/><path d="M2.4 5.6V2.6M3.6 2.6H4.8V4H3.6V5.6H5M6 5.6V2.4L7.6 5.6V2.4" stroke="#d8d8d8" stroke-width="0.6" fill="none"/></svg>
<div class="a" style="left:318.9px;top:122.4px;width:373.1px;height:341.2px;background:#3a3a3a;border:1px solid #76a01c;border-left:none;border-bottom-color:#5c7e1c"></div>
<div class="a" style="left:318.9px;top:123.2px;width:372.3px;height:14.4px;background:#fff"></div>
<div class="t" style="left:322.0px;top:125.8px;height:10px;line-height:10px;color:#111;font-size:6.9px">帧存储配置</div>
<svg style="left:677.8px;top:127.5px" width="6" height="6" viewBox="0 0 6 6"><path d="M0.3 0.3L5.7 5.7M5.7 0.3L0.3 5.7" stroke="#333" stroke-width="0.7"/></svg>
<div class="t" style="left:324.0px;top:147.0px;height:10px;line-height:10px;color:#f0f0f0;font-size:7.4px">数据源列表:</div>
<div class="a" style="left:367.0px;top:146.0px;width:105.5px;height:11.8px;background:#252525;border-radius:1.5px"></div>
<div class="t" style="left:373.5px;top:147.4px;height:10px;line-height:10px;color:#7a7a7a;font-size:6.9px">请输入需要查找的数据...</div>
<div class="a" style="left:324.3px;top:161.4px;width:195.2px;height:221.4px;background:#141414"></div>
<div class="a" style="left:324.3px;top:161.4px;width:189.2px;height:13.2px;background:#333;border:1px solid #2a2a2a"></div>
<div class="t c" style="left:388.9px;top:163.8px;width:60px;height:10px;line-height:10px;color:#9a9a9a;font-size:7.3px">数据源</div>
<div class="a" style="left:513.5px;top:161.4px;width:6.0px;height:221.4px;background:#343434"></div>
<svg style="left:513.5px;top:162px" width="6" height="221" viewBox="0 0 6 221"><path d="M3 1.2L4.3 3H1.7Z M3 220L4.3 218.3H1.7Z" fill="#eee"/><rect x="1.7" y="4.8" width="2.8" height="7.6" rx="1.4" fill="#aaa"/></svg>
<div class="a" style="left:324.3px;top:174.8px;width:189.2px;height:12.2px;background:#0d0d0d"></div>
<svg style="left:338.6px;top:179.0px" width="5" height="4" viewBox="0 0 5 4"><path d="M0.4 0.6H4.6L2.5 3.3Z" fill="#eee"/></svg>
<div class="t" style="left:348.6px;top:177.0px;height:10px;line-height:10px;color:#eee;font-size:6.9px">常规数据</div>
<div class="a" style="left:324.3px;top:187.0px;width:189.2px;height:12.2px;background:#1c1c1c"></div>
<div class="t" style="left:360.0px;top:189.2px;height:10px;line-height:10px;color:#ea543c;font-size:7.4px;letter-spacing:-0.1px">U1</div>
<div class="a" style="left:324.3px;top:199.2px;width:189.2px;height:12.2px;background:#0d0d0d"></div>
<div class="t" style="left:360.0px;top:201.4px;height:10px;line-height:10px;color:#b2ba18;font-size:7.4px;letter-spacing:-0.1px">I1</div>
<div class="a" style="left:324.3px;top:211.4px;width:189.2px;height:12.2px;background:#1c1c1c"></div>
<div class="t" style="left:360.0px;top:213.6px;height:10px;line-height:10px;color:#1aaad0;font-size:7.4px;letter-spacing:-0.1px">P1</div>
<div class="a" style="left:324.3px;top:223.6px;width:189.2px;height:12.2px;background:#0d0d0d"></div>
<div class="t" style="left:360.0px;top:225.8px;height:10px;line-height:10px;color:#b050f0;font-size:7.4px;letter-spacing:-0.1px">S1</div>
<div class="a" style="left:324.3px;top:235.8px;width:189.2px;height:12.2px;background:#1c1c1c"></div>
<div class="t" style="left:360.0px;top:238.0px;height:10px;line-height:10px;color:#f08028;font-size:7.4px;letter-spacing:-0.1px">Q1</div>
<div class="a" style="left:324.3px;top:248.0px;width:189.2px;height:12.2px;background:#0d0d0d"></div>
<div class="t" style="left:360.0px;top:250.2px;height:10px;line-height:10px;color:#8cc01c;font-size:7.4px;letter-spacing:-0.1px">λ1</div>
<div class="a" style="left:324.3px;top:260.2px;width:189.2px;height:12.2px;background:#1c1c1c"></div>
<div class="t" style="left:360.0px;top:262.4px;height:10px;line-height:10px;color:#2a8cc8;font-size:7.4px;letter-spacing:-0.1px">φ1</div>
<div class="a" style="left:324.3px;top:272.4px;width:189.2px;height:12.2px;background:#404040"></div>
<div class="t" style="left:360.0px;top:274.6px;height:10px;line-height:10px;color:#18b848;font-size:7.4px;letter-spacing:-0.1px">U+peak1</div>
<div class="a" style="left:324.3px;top:284.6px;width:189.2px;height:12.2px;background:#1c1c1c"></div>
<div class="t" style="left:360.0px;top:286.8px;height:10px;line-height:10px;color:#d8a018;font-size:7.4px;letter-spacing:-0.1px">U-peak1</div>
<div class="a" style="left:324.3px;top:296.8px;width:189.2px;height:12.2px;background:#0d0d0d"></div>
<div class="t" style="left:360.0px;top:299.0px;height:10px;line-height:10px;color:#c848c8;font-size:7.4px;letter-spacing:-0.1px">Ufreq1</div>
<div class="a" style="left:324.3px;top:309.0px;width:189.2px;height:12.2px;background:#1c1c1c"></div>
<div class="t" style="left:360.0px;top:311.2px;height:10px;line-height:10px;color:#e09020;font-size:7.4px;letter-spacing:-0.1px">Ifreq1</div>
<div class="a" style="left:324.3px;top:321.2px;width:189.2px;height:12.2px;background:#0d0d0d"></div>
<div class="t" style="left:360.0px;top:323.4px;height:10px;line-height:10px;color:#58b818;font-size:7.4px;letter-spacing:-0.1px">MATH1</div>
<div class="a" style="left:324.3px;top:333.4px;width:189.2px;height:12.2px;background:#1c1c1c"></div>
<div class="t" style="left:360.0px;top:335.6px;height:10px;line-height:10px;color:#2880c0;font-size:7.4px;letter-spacing:-0.1px">TIME1</div>
<div class="a" style="left:324.3px;top:345.6px;width:189.2px;height:12.2px;background:#0d0d0d"></div>
<div class="t" style="left:360.0px;top:347.8px;height:10px;line-height:10px;color:#c848a8;font-size:7.4px;letter-spacing:-0.1px">WP1</div>
<div class="a" style="left:324.3px;top:357.8px;width:189.2px;height:12.2px;background:#1c1c1c"></div>
<div class="t" style="left:360.0px;top:360.0px;height:10px;line-height:10px;color:#e0a018;font-size:7.4px;letter-spacing:-0.1px">WP+1</div>
<div class="a" style="left:324.3px;top:370.0px;width:189.2px;height:12.2px;background:#404040"></div>
<div class="t" style="left:360.0px;top:372.2px;height:10px;line-height:10px;color:#20b038;font-size:7.4px;letter-spacing:-0.1px">WP-1</div>
<svg style="left:527px;top:212.8px" width="17" height="17" viewBox="0 0 17 17"><circle cx="8.5" cy="8.5" r="8.4" fill="#7aa51c"/><g transform="translate(8.5 8.5) scale(1 1)"><path d="M-3.6 0H3.2M0.8 -2.4L3.4 0L0.8 2.4" fill="none" stroke="#fff" stroke-width="1.3"/></g></svg>
<svg style="left:527px;top:299.9px" width="17" height="17" viewBox="0 0 17 17"><circle cx="8.5" cy="8.5" r="8.4" fill="#7aa51c"/><g transform="translate(8.5 8.5) scale(-1 1)"><path d="M-3.6 0H3.2M0.8 -2.4L3.4 0L0.8 2.4" fill="none" stroke="#fff" stroke-width="1.3"/></g></svg>
<div class="t" style="left:552.5px;top:146.0px;height:10px;line-height:10px;color:#f0f0f0;font-size:7.2px">存储项:</div>
<div class="a" style="left:552.0px;top:158.6px;width:136.0px;height:226.2px;background:#000"></div>
<div class="a" style="left:552.0px;top:158.6px;width:136.0px;height:12.8px;background:#333;border:1px solid #2a2a2a"></div>
<div class="t c" style="left:590.0px;top:160.8px;width:60px;height:10px;line-height:10px;color:#9a9a9a;font-size:7px">存储项</div>
<div class="a" style="left:552.0px;top:171.6px;width:136.0px;height:12.2px;background:#0d0d0d"></div>
<div class="t" style="left:566.5px;top:173.8px;height:10px;line-height:10px;color:#eee;font-size:7.4px;letter-spacing:-0.1px">U1</div>
<div class="a" style="left:552.0px;top:183.8px;width:136.0px;height:12.2px;background:#1c1c1c"></div>
<div class="t" style="left:566.5px;top:186.0px;height:10px;line-height:10px;color:#eee;font-size:7.4px;letter-spacing:-0.1px">I1</div>
<div class="a" style="left:552.0px;top:196.0px;width:136.0px;height:12.2px;background:#0d0d0d"></div>
<div class="t" style="left:566.5px;top:198.2px;height:10px;line-height:10px;color:#eee;font-size:7.4px;letter-spacing:-0.1px">P1</div>
<div class="a" style="left:552.0px;top:208.2px;width:136.0px;height:12.2px;background:#1c1c1c"></div>
<div class="t" style="left:566.5px;top:210.4px;height:10px;line-height:10px;color:#eee;font-size:7.4px;letter-spacing:-0.1px">S1</div>
<div class="a" style="left:552.0px;top:220.4px;width:136.0px;height:12.2px;background:#0d0d0d"></div>
<div class="t" style="left:566.5px;top:222.6px;height:10px;line-height:10px;color:#eee;font-size:7.4px;letter-spacing:-0.1px">U+peak1</div>
<div class="a" style="left:552.0px;top:232.6px;width:136.0px;height:12.2px;background:#1c1c1c"></div>
<div class="t" style="left:566.5px;top:234.8px;height:10px;line-height:10px;color:#eee;font-size:7.4px;letter-spacing:-0.1px">U-peak1</div>
<div class="t" style="left:329.8px;top:391.4px;height:10px;line-height:10px;color:#f4f4f4;font-size:7.15px">文件名称:</div>
<div class="t" style="left:329.8px;top:409.4px;height:10px;line-height:10px;color:#f4f4f4;font-size:7.15px">文件分割行数:</div>
<div class="a" style="left:399.0px;top:390.0px;width:110.2px;height:13.6px;background:#666;border-radius:3px"></div>
<div class="a" style="left:435.6px;top:390.0px;width:36.6px;height:13.6px;background:linear-gradient(#86b420,#6f9a18)"></div>
<div class="a" style="left:435.2px;top:390.0px;width:0.7px;height:13.6px;background:#3a3a3a"></div>
<div class="a" style="left:472.0px;top:390.0px;width:0.7px;height:13.6px;background:#3a3a3a"></div>
<div class="t c" style="left:402.2px;top:392.6px;width:30px;height:10px;line-height:10px;color:#d8d8d8;font-size:7px">固定</div>
<div class="t c" style="left:438.8px;top:392.6px;width:30px;height:10px;line-height:10px;color:#fff;font-size:7px">时间</div>
<div class="t c" style="left:475.6px;top:392.6px;width:30px;height:10px;line-height:10px;color:#d8d8d8;font-size:7px">自增</div>
<div class="a" style="left:399.7px;top:409.3px;width:78.1px;height:11.9px;background:#1c1c1c;border-radius:1.5px"></div>
<div class="t" style="left:405.3px;top:411.2px;height:10px;line-height:10px;color:#f0f0f0;font-size:7.3px;letter-spacing:-0.1px">50K</div>
<svg style="left:470.300px;top:414.300px" width="4" height="2.600" viewBox="0 0 5 3"><path d="M0.400 0.400L2.500 2.500L4.600 0.400" fill="none" stroke="#ddd" stroke-width="1"/></svg>
<div class="a" style="left:332.8px;top:429.0px;width:7.2px;height:7.2px;border:1px solid #ddd;border-radius:1px;background:#2a2a2a"></div>
<svg style="left:334px;top:430.3px" width="5" height="5" viewBox="0 0 5 5"><path d="M0.6 2.6L2 4L4.5 0.8" fill="none" stroke="#fff" stroke-width="0.9"/></svg>
<div class="t" style="left:341.5px;top:428.6px;height:10px;line-height:10px;color:#f0f0f0;font-size:7px">是否同步存储</div>
<div class="t" style="left:399.0px;top:428.8px;height:10px;line-height:10px;color:#f0f0f0;font-size:7px">存储路径:</div>
<div class="a" style="left:434.4px;top:426.6px;width:132.8px;height:12.6px;background:#1c1c1c;border:1px solid #668c1c;border-radius:2px"></div>
<div class="t" style="left:439.5px;top:428.8px;height:10px;line-height:10px;color:#fff;font-size:7.6px;letter-spacing:-0.12px">D:/Users/xuchao|Desktop</div>
<div class="a" style="left:571.0px;top:427.5px;width:13.2px;height:11.5px;background:#6c6c6c;border-radius:1px"></div>
<div class="a" style="left:394.0px;top:443.5px;width:52.7px;height:12.7px;border:1px solid #b0b0b0;border-radius:3px;background:#3a3a3a"></div>
<div class="t c" style="left:385.4px;top:445.7px;width:70px;height:10px;line-height:10px;color:#f4f4f4;font-size:6.9px">保存所有测试项</div>
<div class="a" style="left:452.6px;top:443.5px;width:53.6px;height:12.7px;border:1px solid #b0b0b0;border-radius:3px;background:#3a3a3a"></div>
<div class="t c" style="left:444.4px;top:445.7px;width:70px;height:10px;line-height:10px;color:#f4f4f4;font-size:6.9px">清空所有存储项</div>
<div class="a" style="left:576.0px;top:390.3px;width:49.0px;height:12.8px;border:1px solid #b0b0b0;border-radius:3px;background:#3a3a3a"></div>
<div class="t c" style="left:565.5px;top:392.5px;width:70px;height:10px;line-height:10px;color:#f4f4f4;font-size:6.9px">导出存储配置</div>
<div class="a" style="left:641.0px;top:390.3px;width:47.8px;height:12.8px;border:1px solid #b0b0b0;border-radius:3px;background:#3a3a3a"></div>
<div class="t c" style="left:629.9px;top:392.5px;width:70px;height:10px;line-height:10px;color:#f4f4f4;font-size:6.9px">导入存储配置</div>
<div class="a" style="left:581.6px;top:444.0px;width:37.2px;height:11.8px;background:linear-gradient(#86b420,#6f9a18);border-radius:1.5px"></div>
<div class="t c" style="left:585.2px;top:445.6px;width:30px;height:10px;line-height:10px;color:#fff;font-size:7px">确定</div>
</div></body></html>
